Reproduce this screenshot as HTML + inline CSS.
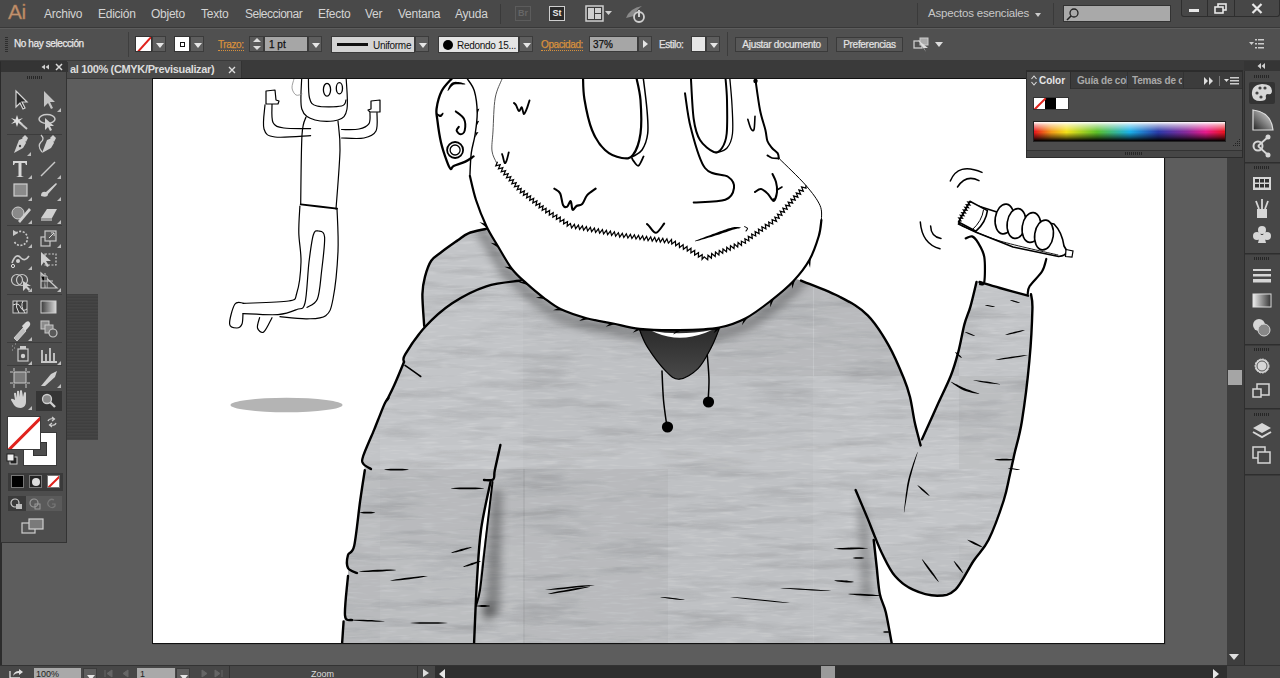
<!DOCTYPE html>
<html><head><meta charset="utf-8">
<style>
*{margin:0;padding:0;box-sizing:border-box;white-space:nowrap}
html,body{width:1280px;height:678px;overflow:hidden;background:#5d5d5d;font-family:"Liberation Sans",sans-serif}
.a{position:absolute}
#menubar{left:0;top:0;width:1280px;height:28px;background:#494949;border-bottom:1px solid #393939}
.mi{position:absolute;top:7px;font-size:12px;color:#d4d4d4;letter-spacing:-0.25px}
#ctrl{left:0;top:29px;width:1280px;height:32px;background:#505050;border-bottom:1px solid #3a3a3a}
.lbl{position:absolute;font-size:10px;color:#e0e0e0;letter-spacing:-0.4px;-webkit-text-stroke:0.25px currentColor}
.dd{position:absolute;width:14px;height:16px;background:#5e5e5e;border:1px solid #3c3c3c}
.dd:after{content:"";position:absolute;left:3px;top:6px;border-left:4px solid transparent;border-right:4px solid transparent;border-top:5px solid #e6e6e6}
.btn{position:absolute;height:15px;background:#575757;border:1px solid #3a3a3a;font-size:10px;color:#e4e4e4;text-align:center;line-height:13px;letter-spacing:-0.3px;-webkit-text-stroke:0.2px currentColor}
#tabbar{left:67px;top:61px;width:1177px;height:18px;background:#3a3a3a}
#tab{left:67px;top:61px;width:175px;height:17px;background:#4a4a4a;border-right:1px solid #333}
#artboard{left:152px;top:78px;width:1013px;height:566px;background:#fff;border:1px solid #111;box-shadow:1px 1px 0 #555}
#tools{left:0;top:61px;width:67px;height:482px;background:#4d4d4d;border:1px solid #333;border-left:1px solid #2a2a2a}
#status{left:0;top:665px;width:1280px;height:13px;background:#474747;border-top:1px solid #333}
</style></head>
<body>
<!-- menubar -->
<div id="menubar" class="a">
  <div class="a" style="left:8px;top:0px;font-size:21px;font-weight:normal;letter-spacing:-0.5px;color:#c09270;-webkit-text-stroke:0.4px #a8734c">Ai</div>
  <div class="mi" style="left:44px">Archivo</div>
  <div class="mi" style="left:98px">Edición</div>
  <div class="mi" style="left:151px">Objeto</div>
  <div class="mi" style="left:201px">Texto</div>
  <div class="mi" style="left:245px;letter-spacing:-0.5px">Seleccionar</div>
  <div class="mi" style="left:318px">Efecto</div>
  <div class="mi" style="left:365px">Ver</div>
  <div class="mi" style="left:398px">Ventana</div>
  <div class="mi" style="left:455px">Ayuda</div>
  <div class="a" style="left:500px;top:4px;width:1px;height:20px;background:#3a3a3a"></div>
  <div class="a" style="left:515px;top:6px;width:16px;height:15px;border:1px solid #5c5c5c;color:#666;font-size:9px;font-weight:bold;text-align:center;line-height:13px">Br</div>
  <div class="a" style="left:549px;top:6px;width:16px;height:15px;border:1px solid #cfcfcf;background:#2a2a2a;color:#e8e8e8;font-size:9px;font-weight:bold;text-align:center;line-height:13px">St</div>
  <svg class="a" style="left:585px;top:5px" width="28" height="18" viewBox="0 0 28 18"><rect x="1" y="1" width="17" height="15" fill="#3a3a3a" stroke="#cfcfcf" stroke-width="1.5"/><rect x="3" y="3" width="6" height="11" fill="#cfcfcf"/><rect x="10" y="3" width="6" height="5" fill="#cfcfcf"/><rect x="10" y="9" width="6" height="5" fill="#cfcfcf"/><path d="M20 6 L27 6 L23.5 10 Z" fill="#cfcfcf"/></svg>
  <svg class="a" style="left:624px;top:4px" width="24" height="20" viewBox="0 0 24 20"><path d="M2 14 Q6 4 18 2 Q12 6 10 12 Z" fill="#8a8a8a"/><circle cx="15" cy="13" r="5" fill="none" stroke="#d0d0d0" stroke-width="1.8"/><rect x="14" y="6" width="2" height="7" fill="#d0d0d0"/></svg>
  <div class="a" style="left:917px;top:3px;width:1px;height:22px;background:#3a3a3a"></div>
  <div class="mi" style="left:928px;top:7px;color:#c8c8c8;font-size:11.5px;letter-spacing:-0.2px">Aspectos esenciales</div>
  <div class="a" style="left:1035px;top:13px;border-left:3px solid transparent;border-right:3px solid transparent;border-top:4px solid #ccc"></div>
  <div class="a" style="left:1053px;top:3px;width:1px;height:22px;background:#3a3a3a"></div>
  <div class="a" style="left:1063px;top:5px;width:108px;height:17px;background:#a9a9a9;border:1px solid #333"><svg class="a" style="left:2px;top:1px" width="14" height="14" viewBox="0 0 14 14"><circle cx="8" cy="6" r="4" fill="none" stroke="#222" stroke-width="1.3"/><path d="M5 9 L1 13" stroke="#222" stroke-width="1.6"/></svg></div>
  <div class="a" style="left:1181px;top:0px;width:99px;height:17px;background:#474747;border:1px solid #2e2e2e;border-top:none;border-radius:0 0 3px 3px"></div>
  <div class="a" style="left:1207px;top:0;width:1px;height:17px;background:#2e2e2e"></div>
  <div class="a" style="left:1234px;top:0;width:1px;height:17px;background:#2e2e2e"></div>
  <div class="a" style="left:1189px;top:9px;width:10px;height:3px;background:#e8e8e8"></div>
  <svg class="a" style="left:1214px;top:3px" width="13" height="11" viewBox="0 0 13 11"><rect x="4" y="1" width="8" height="6" fill="none" stroke="#e8e8e8" stroke-width="1.6"/><rect x="1" y="4" width="8" height="6" fill="#474747" stroke="#e8e8e8" stroke-width="1.6"/></svg>
  <svg class="a" style="left:1251px;top:3px" width="12" height="11" viewBox="0 0 12 11"><path d="M1.5 1 L10.5 10 M10.5 1 L1.5 10" stroke="#e8e8e8" stroke-width="2.2"/></svg>
</div>
<!-- control bar -->
<div id="ctrl" class="a">
  <div class="a" style="left:5px;top:8px;width:3px;height:16px;background:repeating-linear-gradient(#2e2e2e 0 1px,transparent 1px 2px)"></div>
  <div class="lbl" style="left:14px;top:9px;color:#e8e8e8">No hay selección</div>
  <div class="a" style="left:128px;top:3px;width:1px;height:25px;background:#3e3e3e"></div>
  <div class="a" style="left:135px;top:7px;width:17px;height:16px;background:#fff;border:1px solid #333;overflow:hidden"><div class="a" style="left:-3px;top:7px;width:22px;height:2px;background:#e0221c;transform:rotate(-48deg)"></div></div>
  <div class="dd" style="left:152px;top:7px"></div>
  <div class="a" style="left:174px;top:7px;width:16px;height:16px;background:#fff;border:1px solid #333"><div class="a" style="left:5px;top:5px;width:5px;height:5px;border:1.5px solid #111"></div></div>
  <div class="dd" style="left:190px;top:7px"></div>
  <div class="lbl" style="left:218px;top:10px;color:#d8913d;border-bottom:1px dotted #d8913d;line-height:11px">Trazo:</div>
  <div class="a" style="left:249px;top:7px;width:15px;height:16px;background:#5a5a5a;border:1px solid #3a3a3a"></div>
  <div class="a" style="left:253px;top:9px;border-left:4px solid transparent;border-right:4px solid transparent;border-bottom:4px solid #ddd"></div>
  <div class="a" style="left:253px;top:17px;border-left:4px solid transparent;border-right:4px solid transparent;border-top:4px solid #ddd"></div>
  <div class="a" style="left:264px;top:7px;width:44px;height:16px;background:#a6a6a6;border:1px solid #3a3a3a;font-size:10px;color:#111;padding-left:4px;line-height:16px;-webkit-text-stroke:0.25px #111">1 pt</div>
  <div class="dd" style="left:308px;top:7px"></div>
  <div class="a" style="left:331px;top:7px;width:84px;height:17px;background:#d4d4d4;border:1px solid #3a3a3a;font-size:10px;color:#111;line-height:15px"><div class="a" style="left:5px;top:6px;width:31px;height:3px;background:#111"></div><span class="a" style="left:41px;top:1px;letter-spacing:-0.3px">Uniforme</span></div>
  <div class="dd" style="left:415px;top:7px"></div>
  <div class="a" style="left:438px;top:7px;width:81px;height:17px;background:#e4e4e4;border:1px solid #3a3a3a;font-size:10px;color:#111;line-height:15px"><div class="a" style="left:4px;top:3px;width:10px;height:10px;border-radius:50%;background:#000"></div><span class="a" style="left:18px;top:1px;letter-spacing:-0.3px">Redondo 15...</span></div>
  <div class="dd" style="left:519px;top:7px"></div>
  <div class="lbl" style="left:541px;top:10px;color:#d8913d;border-bottom:1px dotted #d8913d;line-height:11px">Opacidad:</div>
  <div class="a" style="left:589px;top:7px;width:49px;height:16px;background:#a6a6a6;border:1px solid #3a3a3a;font-size:10px;color:#111;padding-left:3px;line-height:16px;-webkit-text-stroke:0.25px #111">37%</div>
  <div class="a" style="left:638px;top:7px;width:14px;height:16px;background:#5e5e5e;border:1px solid #3c3c3c"><div class="a" style="left:4px;top:3px;border-top:4px solid transparent;border-bottom:4px solid transparent;border-left:5px solid #e6e6e6"></div></div>
  <div class="lbl" style="left:659px;top:10px">Estilo:</div>
  <div class="a" style="left:691px;top:7px;width:15px;height:16px;background:#e6e6e6;border:1px solid #3a3a3a"></div>
  <div class="dd" style="left:706px;top:7px"></div>
  <div class="a" style="left:727px;top:3px;width:1px;height:24px;background:#3c3c3c"></div>
  <div class="btn" style="left:735px;top:8px;width:93px">Ajustar documento</div>
  <div class="btn" style="left:836px;top:8px;width:67px">Preferencias</div>
  <svg class="a" style="left:912px;top:7px" width="34" height="18" viewBox="0 0 34 18"><rect x="2" y="5" width="8" height="7" fill="none" stroke="#ccc" stroke-width="1.3"/><rect x="8" y="2" width="8" height="7" fill="#aaa" stroke="#ccc" stroke-width="1"/><path d="M6 4 L16 12 L12 12 L14 16 Z" fill="#ddd"/><path d="M23 6 L31 6 L27 11 Z" fill="#ddd"/></svg>
  <svg class="a" style="left:1249px;top:9px" width="16" height="12" viewBox="0 0 16 12"><path d="M0 4 L5 4 L2.5 7 Z" fill="#ccc"/><rect x="6" y="1" width="2" height="1.5" fill="#ccc"/><rect x="9" y="1" width="6" height="1.5" fill="#ccc"/><rect x="6" y="5" width="2" height="1.5" fill="#ccc"/><rect x="9" y="5" width="6" height="1.5" fill="#ccc"/><rect x="6" y="9" width="2" height="1.5" fill="#ccc"/><rect x="9" y="9" width="6" height="1.5" fill="#ccc"/></svg>
</div>
<!-- pasteboard pieces -->
<div id="tabbar" class="a"></div>
<div id="tab" class="a"><span class="a" style="left:3px;top:2px;font-size:11px;font-weight:bold;color:#dcdcdc;letter-spacing:-0.35px">al 100% (CMYK/Previsualizar)</span><svg class="a" style="left:161px;top:5px" width="8" height="8" viewBox="0 0 8 8"><path d="M1 1 L7 7 M7 1 L1 7" stroke="#ddd" stroke-width="1.4"/></svg></div>
<div id="artboard" class="a"></div>
<!--ART--><svg class="a" style="left:0;top:0" width="1280" height="678" viewBox="0 0 1280 678">
<defs>
<clipPath id="abclip"><rect x="153" y="79" width="1011" height="564"/></clipPath>
<clipPath id="hoodclip"><path d="M486.0 228.8 L468.4 233.3 L457.8 240.3 L441.8 251.8 L431.2 260.7 L425.0 276.6 L422.4 294.3 L424.2 326.0 L405.2 354.3 L403.0 363.2 L394.2 385.3 L385.3 405.2 L374.2 429.6 L363.2 456.0 L364.8 470.2 L360.2 500.5 L354.2 545.8 L348.0 555.0 L348.0 576.0 L345.0 615.3 L342.0 645.0 L892.0 645.0 L885.8 612.3 L879.8 594.0 L876.7 567.0 L876.0 545.0 L874.5 536.0 L882.8 555.0 L895.0 576.0 L913.0 589.7 L937.2 595.7 L955.4 591.0 L973.5 561.0 L988.6 539.8 L1003.7 500.5 L1014.3 458.0 L1021.9 421.2 L1029.4 360.7 L1032.4 309.3 L1031.0 294.2 L1028.0 295.7 L979.5 282.0 L976.5 282.0 L970.5 306.3 L964.4 324.4 L958.4 351.6 L950.8 375.8 L937.0 406.0 L922.0 439.3 L919.0 439.3 L914.5 421.2 L910.0 397.0 L904.0 378.8 L888.8 345.6 L867.7 315.3 L840.5 297.2 L801.0 280.6 L700.0 250.0 L560.0 230.0 Z"/></clipPath>
<filter id="blur6" x="-50%" y="-50%" width="200%" height="200%"><feGaussianBlur stdDeviation="5"/></filter><filter id="blur4" x="-50%" y="-50%" width="200%" height="200%"><feGaussianBlur stdDeviation="4"/></filter>
<filter id="tex" x="0" y="0" width="100%" height="100%" filterUnits="objectBoundingBox"><feTurbulence type="fractalNoise" baseFrequency="0.012 0.1" numOctaves="4" seed="4"/><feColorMatrix type="matrix" values="0 0 0 0 0  0 0 0 0 0  0 0 0 0 0  1.6 0 0 0 -0.75"/></filter><filter id="tex2" x="0" y="0" width="100%" height="100%"><feTurbulence type="fractalNoise" baseFrequency="0.05 0.4" numOctaves="2" seed="9"/><feColorMatrix type="matrix" values="0 0 0 0 1  0 0 0 0 1  0 0 0 0 1  1.6 0 0 0 -0.8"/></filter>
<pattern id="cloth" width="1280" height="678" patternUnits="userSpaceOnUse"><rect width="1280" height="678" fill="#bcbdbe"/></pattern>
</defs>
<g clip-path="url(#abclip)">
<path d="M486.0 228.8 L468.4 233.3 L457.8 240.3 L441.8 251.8 L431.2 260.7 L425.0 276.6 L422.4 294.3 L424.2 326.0 L405.2 354.3 L403.0 363.2 L394.2 385.3 L385.3 405.2 L374.2 429.6 L363.2 456.0 L364.8 470.2 L360.2 500.5 L354.2 545.8 L348.0 555.0 L348.0 576.0 L345.0 615.3 L342.0 645.0 L892.0 645.0 L885.8 612.3 L879.8 594.0 L876.7 567.0 L876.0 545.0 L874.5 536.0 L882.8 555.0 L895.0 576.0 L913.0 589.7 L937.2 595.7 L955.4 591.0 L973.5 561.0 L988.6 539.8 L1003.7 500.5 L1014.3 458.0 L1021.9 421.2 L1029.4 360.7 L1032.4 309.3 L1031.0 294.2 L1028.0 295.7 L979.5 282.0 L976.5 282.0 L970.5 306.3 L964.4 324.4 L958.4 351.6 L950.8 375.8 L937.0 406.0 L922.0 439.3 L919.0 439.3 L914.5 421.2 L910.0 397.0 L904.0 378.8 L888.8 345.6 L867.7 315.3 L840.5 297.2 L801.0 280.6 L700.0 250.0 L560.0 230.0 Z" fill="#c3c5c8"/>
<g clip-path="url(#hoodclip)"><rect x="330" y="220" width="720" height="430" fill="#000" filter="url(#tex)" opacity="0.16"/><rect x="330" y="220" width="720" height="430" fill="#fff" filter="url(#tex2)" opacity="0.3"/></g>
<g clip-path="url(#hoodclip)"><rect x="235" y="220" width="145" height="156" fill="#000" opacity="0.02"/><rect x="235" y="376" width="145" height="93" fill="#000" opacity="0.02"/><rect x="235" y="469" width="145" height="77" fill="#000" opacity="0.035"/><rect x="235" y="546" width="145" height="104" fill="#000" opacity="0.05"/><rect x="380" y="469" width="145" height="77" fill="#000" opacity="0.05"/><rect x="380" y="546" width="145" height="104" fill="#000" opacity="0.035"/><rect x="523" y="220" width="145" height="156" fill="#000" opacity="0.02"/><rect x="523" y="376" width="145" height="93" fill="#000" opacity="0.02"/><rect x="523" y="469" width="145" height="77" fill="#000" opacity="0.05"/><rect x="523" y="546" width="145" height="104" fill="#000" opacity="0.05"/><rect x="668" y="220" width="145" height="156" fill="#000" opacity="0.05"/><rect x="668" y="376" width="145" height="93" fill="#000" opacity="0.02"/><rect x="668" y="469" width="145" height="77" fill="#000" opacity="0.02"/><rect x="668" y="546" width="145" height="104" fill="#000" opacity="0.02"/><rect x="814" y="220" width="145" height="156" fill="#000" opacity="0.05"/><rect x="814" y="546" width="145" height="104" fill="#000" opacity="0.02"/><rect x="959" y="376" width="145" height="93" fill="#000" opacity="0.035"/><rect x="959" y="546" width="145" height="104" fill="#000" opacity="0.035"/><rect x="340" y="445" width="700" height="24" fill="#fff" opacity="0.06"/></g>
<g filter="url(#blur4)" clip-path="url(#hoodclip)"><path d="M467.0 164.5 C467.5 170.6 467.8 190.6 470.1 201.3 C472.4 211.9 477.1 220.6 480.9 228.6 C484.6 236.5 488.3 241.7 492.6 249.1 C497.0 256.4 502.3 266.2 507.2 272.7 C512.2 279.1 517.0 282.9 522.5 287.8 C528.0 292.8 534.2 298.1 540.2 302.6 C546.2 307.1 551.0 311.1 558.4 314.7 C565.9 318.3 576.0 321.5 584.9 324.0 C593.8 326.4 602.8 327.6 611.8 329.4 C620.8 331.2 627.7 333.7 639.0 334.8 C650.3 335.9 666.0 336.2 679.5 336.0 C693.0 335.8 708.7 335.5 720.2 333.4 C731.8 331.3 739.3 328.4 748.6 323.5 C757.9 318.7 767.8 310.7 776.0 304.3 C784.2 297.9 791.4 292.0 797.9 285.1 C804.3 278.2 810.3 270.6 814.7 262.7 C819.2 254.8 822.4 244.7 824.5 237.7 C826.6 230.8 826.9 223.8 827.3 221.0" fill="none" stroke="#000" stroke-width="12" opacity="0.28"/><path d="M492 490 L502 490 L500 615 L484 615 Z" fill="#000" opacity="0.3"/><ellipse cx="488" cy="612" rx="6" ry="9" fill="#000" opacity="0.35"/><path d="M858 492 L868 520 L872 600 L862 600 Z" fill="#000" opacity="0.25"/></g>
<path d="M490.5 482.0 C488.9 490.0 483.2 513.7 481.0 530.0 C478.8 546.3 477.9 566.8 477.0 580.0 C476.1 593.2 475.8 604.2 475.5 609.0 L477 603 L481 567 L486 530 L492.5 482 Z" fill="#fff"/>
<path d="M486.0 228.8 C483.1 229.6 473.1 231.4 468.4 233.3 C463.7 235.2 462.2 237.2 457.8 240.3 C453.4 243.4 446.2 248.4 441.8 251.8 C437.4 255.2 434.0 256.6 431.2 260.7 C428.4 264.8 426.5 271.0 425.0 276.6 C423.5 282.2 422.5 286.1 422.4 294.3 C422.3 302.5 423.9 320.7 424.2 326.0" fill="none" stroke="#000" stroke-width="2.4" stroke-linecap="round" stroke-linejoin="round" />
<path d="M520.8 280.5 C515.0 281.5 497.8 282.5 486.3 286.3 C474.8 290.1 462.0 296.7 451.8 303.5 C441.6 310.3 432.8 318.5 425.0 327.0 C417.2 335.5 408.7 348.5 405.2 354.3 C401.7 360.1 404.2 360.7 404.0 362.0" fill="none" stroke="#000" stroke-width="2.4" stroke-linecap="round" stroke-linejoin="round" />
<path d="M404.0 362.0 C402.4 365.9 397.0 379.0 394.2 385.3 C391.4 391.6 388.2 397.6 387.0 400.0" fill="none" stroke="#000" stroke-width="2.4" stroke-linecap="round" stroke-linejoin="round" />
<path d="M388.5 398.0 C387.9 398.8 386.8 399.3 385.0 403.0 C383.2 406.7 379.8 415.6 378.0 420.0 C376.2 424.4 376.7 423.6 374.2 429.6 C371.7 435.6 365.0 450.3 363.2 456.0 C361.4 461.7 362.2 461.8 363.5 464.0 C364.8 466.2 369.8 468.2 371.0 469.0" fill="none" stroke="#000" stroke-width="2.4" stroke-linecap="round" stroke-linejoin="round" />
<path d="M364.8 470.2 C364.0 475.2 362.0 487.9 360.2 500.5 C358.4 513.1 356.2 536.7 354.2 545.8 C352.2 554.9 349.0 551.3 348.0 555.0 C347.0 558.7 346.5 565.0 348.0 568.0 C349.5 571.0 355.5 572.2 357.0 573.0" fill="none" stroke="#000" stroke-width="2.4" stroke-linecap="round" stroke-linejoin="round" />
<path d="M348.0 576.0 C347.5 582.5 344.3 608.0 345.0 615.3 C345.7 622.6 350.8 619.2 352.0 620.0" fill="none" stroke="#000" stroke-width="2.4" stroke-linecap="round" stroke-linejoin="round" />
<path d="M343.6 621.4 C343.3 625.3 342.3 641.1 342.0 645.0" fill="none" stroke="#000" stroke-width="2.4" stroke-linecap="round" stroke-linejoin="round" />
<path d="M405.0 365.4 C407.6 367.2 418.1 374.6 420.7 376.5" fill="none" stroke="#000" stroke-width="1.6" stroke-linecap="round" stroke-linejoin="round" />
<path d="M500.4 445.0 C499.5 449.2 496.0 464.5 494.8 470.2 C493.6 475.9 495.1 477.7 493.3 479.3 C491.5 480.9 485.6 479.9 484.0 480.0" fill="none" stroke="#000" stroke-width="2.4" stroke-linecap="round" stroke-linejoin="round" />
<path d="M490.5 482.0 C488.9 490.0 483.2 513.7 481.0 530.0 C478.8 546.3 478.2 560.8 477.0 580.0 C475.8 599.2 474.5 634.2 474.0 645.0" fill="none" stroke="#000" stroke-width="2.4" stroke-linecap="round" stroke-linejoin="round" />
<path d="M492.5 482.0 C491.8 488.3 489.4 507.8 488.0 520.0 C486.6 532.2 485.3 543.3 484.0 555.0 C482.7 566.7 481.3 581.5 480.0 590.0 C478.7 598.5 476.7 603.3 476.0 606.0" fill="none" stroke="#000" stroke-width="2.0" stroke-linecap="round" stroke-linejoin="round" />
<path d="M801.0 280.6 C807.6 283.4 829.4 291.4 840.5 297.2 C851.6 303.0 859.7 307.2 867.7 315.3 C875.8 323.4 882.8 335.0 888.8 345.6 C894.8 356.2 900.5 370.2 904.0 378.8 C907.5 387.4 908.2 389.9 910.0 397.0 C911.8 404.1 913.0 414.1 914.5 421.2 C916.0 428.2 918.0 435.3 919.0 439.3 C920.0 443.3 920.3 444.4 920.6 445.4" fill="none" stroke="#000" stroke-width="2.4" stroke-linecap="round" stroke-linejoin="round" />
<path d="M922.0 439.3 C924.5 433.8 932.2 416.6 937.0 406.0 C941.8 395.4 947.2 384.9 950.8 375.8 C954.4 366.7 956.1 360.2 958.4 351.6 C960.7 343.0 962.4 331.9 964.4 324.4 C966.4 316.8 968.5 313.4 970.5 306.3 C972.5 299.2 975.5 286.1 976.5 282.0" fill="none" stroke="#000" stroke-width="2.4" stroke-linecap="round" stroke-linejoin="round" />
<path d="M979.5 282.0 C982.9 283.0 991.9 285.7 1000.0 288.0 C1008.1 290.3 1023.3 294.4 1028.0 295.7" fill="none" stroke="#000" stroke-width="2.4" stroke-linecap="round" stroke-linejoin="round" />
<path d="M1031.0 294.2 C1031.2 296.7 1032.7 298.2 1032.4 309.3 C1032.1 320.4 1031.2 342.1 1029.4 360.7 C1027.7 379.3 1024.4 405.6 1021.9 421.2 C1019.4 436.8 1016.3 445.4 1014.3 454.4 C1012.3 463.4 1011.6 467.3 1009.8 475.0 C1008.0 482.7 1007.2 489.7 1003.7 500.5 C1000.2 511.3 993.6 529.7 988.6 539.8 C983.6 549.9 979.0 552.7 973.5 561.0 C968.0 569.3 961.4 583.9 955.4 589.7 C949.4 595.5 944.3 595.7 937.2 595.7 C930.1 595.7 920.0 593.0 913.0 589.7 C906.0 586.4 900.0 581.8 895.0 576.0 C890.0 570.2 886.3 562.0 882.8 555.0 C879.2 548.0 876.2 539.8 873.7 533.7 C871.2 527.6 870.7 525.9 867.7 518.6 C864.7 511.3 857.6 494.8 855.6 490.0" fill="none" stroke="#000" stroke-width="2.4" stroke-linecap="round" stroke-linejoin="round" />
<path d="M873.7 540.0 C874.2 544.5 875.7 558.0 876.7 567.0 C877.7 576.0 878.3 586.5 879.8 594.0 C881.3 601.5 883.8 603.8 885.8 612.3 C887.8 620.8 891.0 639.5 892.0 645.0" fill="none" stroke="#000" stroke-width="2.4" stroke-linecap="round" stroke-linejoin="round" />
<path d="M384.4 469.7 L385.9 470.0 L388.1 470.2 L390.6 470.4 L393.5 470.5 L396.5 470.5 L399.5 470.5 L402.4 470.4 L404.9 470.2 L407.1 470.0 L408.6 469.7 L408.6 469.5 L407.1 469.2 L404.9 469.0 L402.4 468.8 L399.5 468.7 L396.5 468.7 L393.5 468.7 L390.6 468.8 L388.1 469.0 L385.9 469.2 L384.4 469.5 Z" fill="#000"/>
<path d="M451.0 488.5 L453.1 488.8 L456.0 489.0 L459.5 489.2 L463.4 489.3 L467.5 489.3 L471.6 489.3 L475.5 489.2 L479.0 489.0 L481.9 488.8 L484.0 488.5 L484.0 488.3 L481.9 488.0 L479.0 487.8 L475.5 487.6 L471.6 487.5 L467.5 487.5 L463.4 487.5 L459.5 487.6 L456.0 487.8 L453.1 488.0 L451.0 488.3 Z" fill="#000"/>
<path d="M360.0 512.7 L361.0 513.0 L362.3 513.2 L363.9 513.4 L365.6 513.5 L367.5 513.5 L369.4 513.5 L371.1 513.4 L372.7 513.2 L374.0 513.0 L375.0 512.7 L375.0 512.5 L374.0 512.2 L372.7 512.0 L371.1 511.8 L369.4 511.7 L367.5 511.7 L365.6 511.7 L363.9 511.8 L362.3 512.0 L361.0 512.2 L360.0 512.5 Z" fill="#000"/>
<path d="M451.0 553.1 L452.4 553.0 L454.4 552.6 L456.6 552.2 L459.1 551.6 L461.8 550.9 L464.3 550.1 L466.8 549.3 L469.0 548.5 L470.8 547.7 L472.0 547.1 L472.0 546.9 L470.6 547.0 L468.6 547.4 L466.4 547.8 L463.9 548.4 L461.2 549.1 L458.7 549.9 L456.2 550.7 L454.0 551.5 L452.2 552.3 L451.0 552.9 Z" fill="#000"/>
<path d="M463.0 567.1 L464.3 567.0 L465.9 566.6 L467.9 566.2 L470.0 565.6 L472.3 564.9 L474.5 564.1 L476.6 563.3 L478.4 562.5 L480.0 561.7 L481.0 561.1 L481.0 560.9 L479.7 561.0 L478.1 561.4 L476.1 561.8 L474.0 562.4 L471.7 563.1 L469.5 563.9 L467.4 564.7 L465.6 565.5 L464.0 566.3 L463.0 566.9 Z" fill="#000"/>
<path d="M358.7 571.6 L361.1 571.8 L364.5 571.9 L368.5 571.9 L372.9 571.8 L377.6 571.7 L382.3 571.4 L386.8 571.1 L390.8 570.8 L394.1 570.4 L396.5 570.1 L396.5 569.9 L394.1 569.7 L390.7 569.6 L386.7 569.6 L382.3 569.7 L377.6 569.8 L372.9 570.1 L368.4 570.4 L364.4 570.7 L361.1 571.1 L358.7 571.4 Z" fill="#000"/>
<path d="M390.5 580.7 L392.9 580.7 L396.3 580.5 L400.3 580.2 L404.7 579.7 L409.4 579.2 L414.0 578.6 L418.4 577.9 L422.4 577.3 L425.6 576.6 L428.0 576.1 L428.0 575.9 L425.6 575.9 L422.2 576.1 L418.2 576.4 L413.8 576.9 L409.1 577.4 L404.5 578.0 L400.1 578.7 L396.1 579.3 L392.9 580.0 L390.5 580.5 Z" fill="#000"/>
<path d="M547.7 594.1 L550.5 593.9 L554.2 593.4 L558.7 592.8 L563.8 592.1 L569.0 591.2 L574.2 590.2 L579.2 589.3 L583.7 588.3 L587.4 587.4 L590.0 586.7 L590.0 586.5 L587.2 586.7 L583.5 587.2 L579.0 587.8 L573.9 588.5 L568.7 589.4 L563.5 590.4 L558.5 591.3 L554.0 592.3 L550.3 593.2 L547.7 593.9 Z" fill="#000"/>
<path d="M351.0 620.1 L353.1 620.4 L356.1 620.7 L359.6 621.0 L363.5 621.3 L367.7 621.5 L371.8 621.6 L375.8 621.7 L379.3 621.7 L382.2 621.6 L384.4 621.5 L384.4 621.3 L382.3 621.0 L379.3 620.7 L375.8 620.4 L371.9 620.1 L367.7 619.9 L363.6 619.8 L359.6 619.7 L356.1 619.7 L353.2 619.8 L351.0 619.9 Z" fill="#000"/>
<path d="M410.0 623.1 L412.4 623.3 L415.8 623.5 L419.8 623.7 L424.3 623.8 L429.0 623.8 L433.7 623.8 L438.2 623.7 L442.2 623.5 L445.6 623.3 L448.0 623.1 L448.0 622.9 L445.6 622.7 L442.2 622.5 L438.2 622.3 L433.7 622.2 L429.0 622.2 L424.3 622.2 L419.8 622.3 L415.8 622.5 L412.4 622.7 L410.0 622.9 Z" fill="#000"/>
<path d="M476.6 606.1 L477.5 606.4 L478.6 606.6 L480.1 606.8 L481.6 606.9 L483.3 606.9 L485.0 606.9 L486.5 606.8 L488.0 606.6 L489.1 606.4 L490.0 606.1 L490.0 605.9 L489.1 605.6 L488.0 605.4 L486.5 605.2 L485.0 605.1 L483.3 605.1 L481.6 605.1 L480.1 605.2 L478.6 605.4 L477.5 605.6 L476.6 605.9 Z" fill="#000"/>
<path d="M834.0 548.9 L836.2 549.1 L839.1 549.3 L842.7 549.4 L846.7 549.5 L850.9 549.4 L855.0 549.3 L859.0 549.1 L862.6 548.9 L865.5 548.6 L867.7 548.3 L867.7 548.1 L865.5 547.9 L862.6 547.7 L859.0 547.6 L855.0 547.5 L850.8 547.6 L846.7 547.7 L842.7 547.9 L839.1 548.1 L836.2 548.4 L834.0 548.7 Z" fill="#000"/>
<path d="M852.6 558.1 L853.4 558.3 L854.4 558.5 L855.7 558.7 L857.1 558.8 L858.6 558.8 L860.1 558.8 L861.5 558.7 L862.8 558.5 L863.8 558.3 L864.6 558.1 L864.6 557.9 L863.8 557.7 L862.8 557.5 L861.5 557.3 L860.1 557.2 L858.6 557.2 L857.1 557.2 L855.7 557.3 L854.4 557.5 L853.4 557.7 L852.6 557.9 Z" fill="#000"/>
<path d="M834.4 580.7 L835.6 581.0 L837.3 581.4 L839.4 581.7 L841.7 582.0 L844.1 582.2 L846.6 582.4 L848.9 582.4 L851.0 582.4 L852.7 582.3 L854.0 582.1 L854.0 581.9 L852.8 581.6 L851.1 581.2 L849.0 580.9 L846.7 580.6 L844.3 580.4 L841.8 580.2 L839.5 580.2 L837.4 580.2 L835.7 580.3 L834.4 580.5 Z" fill="#000"/>
<path d="M780.0 588.1 L783.3 588.4 L787.8 588.8 L793.2 589.3 L799.3 589.7 L805.7 590.1 L812.0 590.4 L818.1 590.7 L823.6 590.9 L828.1 591.1 L831.4 591.1 L831.4 590.9 L828.1 590.6 L823.6 590.2 L818.2 589.7 L812.1 589.3 L805.7 588.9 L799.4 588.6 L793.3 588.3 L787.8 588.1 L783.3 587.9 L780.0 587.9 Z" fill="#000"/>
<path d="M848.0 594.1 L850.1 594.5 L853.0 594.8 L856.5 595.2 L860.4 595.5 L864.5 595.8 L868.5 595.9 L872.4 596.0 L876.0 596.0 L878.9 595.9 L881.0 595.8 L881.0 595.6 L878.9 595.2 L876.0 594.9 L872.5 594.5 L868.6 594.2 L864.5 593.9 L860.5 593.8 L856.6 593.7 L853.0 593.7 L850.1 593.8 L848.0 593.9 Z" fill="#000"/>
<path d="M882.8 632.1 L883.3 632.3 L883.9 632.5 L884.7 632.7 L885.5 632.8 L886.4 632.8 L887.3 632.8 L888.1 632.7 L888.9 632.5 L889.5 632.3 L890.0 632.1 L890.0 631.9 L889.5 631.7 L888.9 631.5 L888.1 631.3 L887.3 631.2 L886.4 631.2 L885.5 631.2 L884.7 631.3 L883.9 631.5 L883.3 631.7 L882.8 631.9 Z" fill="#000"/>
<path d="M994.6 459.8 L995.9 460.1 L997.6 460.3 L999.7 460.5 L1002.0 460.6 L1004.4 460.6 L1006.9 460.6 L1009.2 460.5 L1011.3 460.3 L1013.0 460.1 L1014.3 459.8 L1014.3 459.6 L1013.0 459.3 L1011.3 459.1 L1009.2 458.9 L1006.9 458.8 L1004.4 458.8 L1002.0 458.8 L999.7 458.9 L997.6 459.1 L995.9 459.3 L994.6 459.6 Z" fill="#000"/>
<path d="M967.4 539.9 L968.2 540.6 L969.5 541.5 L971.0 542.4 L972.7 543.4 L974.6 544.4 L976.5 545.3 L978.3 546.0 L980.0 546.7 L981.5 547.1 L982.6 547.4 L982.6 547.2 L981.8 546.5 L980.5 545.6 L979.0 544.7 L977.3 543.7 L975.4 542.7 L973.5 541.8 L971.7 541.1 L970.0 540.4 L968.5 540.0 L967.4 539.7 Z" fill="#000"/>
<path d="M921.9 559.5 L922.8 561.1 L924.1 563.2 L925.7 565.7 L927.6 568.4 L929.6 571.2 L931.7 574.0 L933.8 576.6 L935.7 578.9 L937.3 580.8 L938.6 582.1 L938.8 581.9 L937.9 580.3 L936.6 578.2 L935.0 575.7 L933.1 573.0 L931.1 570.2 L929.0 567.4 L926.9 564.8 L925.0 562.5 L923.4 560.6 L922.1 559.3 Z" fill="#000"/>
<path d="M953.7 561.1 L954.1 562.0 L954.8 563.1 L955.6 564.5 L956.6 566.0 L957.8 567.5 L958.9 569.0 L960.1 570.3 L961.2 571.5 L962.2 572.4 L962.9 573.1 L963.1 572.9 L962.7 572.0 L962.0 570.9 L961.2 569.5 L960.2 568.0 L959.0 566.5 L957.9 565.0 L956.7 563.7 L955.6 562.5 L954.6 561.6 L953.9 560.9 Z" fill="#000"/>
<path d="M904.1 512.6 L904.5 510.7 L904.9 508.1 L905.4 505.1 L906.0 501.8 L906.6 498.1 L907.2 494.4 L907.8 490.6 L908.4 486.9 L909.1 483.4 L909.8 480.2 L910.5 477.1 L911.4 473.9 L912.3 470.6 L913.2 467.3 L914.2 464.1 L915.1 461.1 L915.9 458.3 L916.7 455.8 L917.3 453.7 L917.7 452.0 L917.5 452.0 L916.9 453.6 L916.1 455.6 L915.1 458.1 L914.1 460.8 L913.0 463.8 L912.0 466.9 L910.9 470.2 L909.9 473.4 L909.0 476.7 L908.2 479.8 L907.5 483.1 L906.9 486.6 L906.4 490.4 L905.8 494.2 L905.4 498.0 L905.0 501.6 L904.6 505.0 L904.3 508.1 L904.1 510.6 L903.9 512.6 Z" fill="#000"/>
<path d="M917.5 485.4 L918.2 486.2 L919.1 487.3 L920.2 488.6 L921.6 489.9 L923.1 491.3 L924.6 492.6 L926.1 493.7 L927.4 494.8 L928.6 495.6 L929.5 496.1 L929.7 495.9 L929.0 495.1 L928.1 494.0 L927.0 492.7 L925.6 491.4 L924.1 490.0 L922.6 488.7 L921.1 487.6 L919.8 486.5 L918.6 485.7 L917.7 485.2 Z" fill="#000"/>
<path d="M950.8 382.0 L951.5 382.6 L952.4 383.3 L953.5 384.2 L954.8 385.1 L956.2 386.1 L957.7 387.1 L959.3 388.0 L960.9 388.9 L962.4 389.8 L964.0 390.5 L965.5 391.1 L967.2 391.6 L969.0 392.1 L970.8 392.6 L972.6 393.0 L974.3 393.3 L975.9 393.6 L977.3 393.8 L978.5 394.0 L979.5 394.1 L979.5 393.9 L978.7 393.5 L977.5 393.0 L976.2 392.5 L974.7 391.9 L973.0 391.4 L971.3 390.8 L969.6 390.1 L967.9 389.5 L966.3 388.9 L964.8 388.3 L963.4 387.7 L961.9 387.0 L960.3 386.2 L958.7 385.4 L957.1 384.6 L955.6 383.9 L954.1 383.2 L952.8 382.6 L951.7 382.1 L950.8 381.8 Z" fill="#000"/>
<path d="M973.5 380.4 L975.2 380.8 L977.5 381.3 L980.3 381.9 L983.4 382.5 L986.6 383.0 L989.9 383.4 L993.1 383.8 L995.9 384.1 L998.3 384.3 L1000.0 384.4 L1000.0 384.2 L998.3 383.8 L996.0 383.3 L993.2 382.7 L990.1 382.1 L986.9 381.6 L983.6 381.2 L980.4 380.8 L977.6 380.5 L975.2 380.3 L973.5 380.2 Z" fill="#000"/>
<path d="M1010.0 300.1 L1010.6 300.4 L1011.4 300.8 L1012.4 301.2 L1013.6 301.7 L1014.8 302.1 L1016.1 302.4 L1017.3 302.7 L1018.4 302.9 L1019.3 303.0 L1020.0 303.1 L1020.0 302.9 L1019.4 302.6 L1018.6 302.2 L1017.6 301.8 L1016.4 301.3 L1015.2 300.9 L1013.9 300.6 L1012.7 300.3 L1011.6 300.1 L1010.7 300.0 L1010.0 299.9 Z" fill="#000"/>
<path d="M985.0 305.1 L985.6 305.4 L986.4 305.7 L987.5 306.0 L988.7 306.3 L989.9 306.6 L991.1 306.8 L992.3 307.0 L993.4 307.1 L994.3 307.1 L995.0 307.1 L995.0 306.9 L994.4 306.6 L993.6 306.3 L992.5 306.0 L991.3 305.7 L990.1 305.4 L988.9 305.2 L987.7 305.0 L986.6 304.9 L985.7 304.9 L985.0 304.9 Z" fill="#000"/>
<path d="M965.0 332.1 L965.5 332.5 L966.4 333.0 L967.4 333.6 L968.5 334.1 L969.7 334.6 L971.0 335.1 L972.2 335.5 L973.3 335.8 L974.3 336.0 L975.0 336.1 L975.0 335.9 L974.5 335.5 L973.6 335.0 L972.6 334.4 L971.5 333.9 L970.3 333.4 L969.0 332.9 L967.8 332.5 L966.7 332.2 L965.7 332.0 L965.0 331.9 Z" fill="#000"/>
<path d="M1005.0 335.1 L1006.3 335.0 L1008.1 334.7 L1010.3 334.3 L1012.7 333.8 L1015.2 333.2 L1017.6 332.5 L1020.0 331.9 L1022.1 331.2 L1023.8 330.6 L1025.0 330.1 L1025.0 329.9 L1023.7 330.0 L1021.9 330.3 L1019.7 330.7 L1017.3 331.2 L1014.8 331.8 L1012.4 332.5 L1010.0 333.1 L1007.9 333.8 L1006.2 334.4 L1005.0 334.9 Z" fill="#000"/>
<path d="M995.0 360.1 L997.2 360.0 L1000.1 359.7 L1003.6 359.3 L1007.5 358.8 L1011.6 358.2 L1015.7 357.5 L1019.6 356.9 L1023.1 356.2 L1025.9 355.6 L1028.0 355.1 L1028.0 354.9 L1025.8 355.0 L1022.9 355.3 L1019.4 355.7 L1015.5 356.2 L1011.4 356.8 L1007.3 357.5 L1003.4 358.1 L999.9 358.8 L997.1 359.4 L995.0 359.9 Z" fill="#000"/>
<path d="M954.9 352.1 L955.3 352.6 L955.8 353.3 L956.4 354.0 L957.2 354.8 L958.1 355.5 L958.9 356.2 L959.8 356.9 L960.6 357.4 L961.4 357.8 L961.9 358.1 L962.1 357.9 L961.7 357.4 L961.2 356.7 L960.6 356.0 L959.8 355.2 L958.9 354.5 L958.1 353.8 L957.2 353.1 L956.4 352.6 L955.6 352.2 L955.1 351.9 Z" fill="#000"/>
<path d="M660.0 597.1 L661.6 597.4 L663.8 597.8 L666.4 598.3 L669.3 598.7 L672.4 599.1 L675.5 599.4 L678.5 599.7 L681.2 599.9 L683.4 600.1 L685.0 600.1 L685.0 599.9 L683.4 599.6 L681.2 599.2 L678.6 598.7 L675.7 598.3 L672.6 597.9 L669.5 597.6 L666.5 597.3 L663.8 597.1 L661.6 596.9 L660.0 596.9 Z" fill="#000"/>
<path d="M730.0 597.1 L733.8 597.6 L739.1 598.3 L745.4 599.0 L752.5 599.8 L759.9 600.6 L767.4 601.3 L774.5 601.9 L780.8 602.5 L786.1 602.9 L790.0 603.1 L790.0 602.9 L786.2 602.4 L780.9 601.7 L774.6 601.0 L767.5 600.2 L760.1 599.4 L752.6 598.7 L745.5 598.1 L739.2 597.5 L733.9 597.1 L730.0 596.9 Z" fill="#000"/>
<path d="M545.0 590.1 L548.2 590.0 L552.7 589.8 L558.0 589.4 L563.9 588.9 L570.1 588.3 L576.3 587.6 L582.2 587.0 L587.5 586.3 L591.8 585.6 L595.0 585.1 L595.0 584.9 L591.8 585.0 L587.3 585.2 L582.0 585.6 L576.1 586.1 L569.9 586.7 L563.7 587.4 L557.8 588.0 L552.5 588.7 L548.2 589.4 L545.0 589.9 Z" fill="#000"/>
<path d="M1008.0 468.1 L1008.7 468.4 L1009.8 468.7 L1011.0 469.0 L1012.4 469.3 L1013.9 469.6 L1015.4 469.8 L1016.8 470.0 L1018.1 470.1 L1019.2 470.1 L1020.0 470.1 L1020.0 469.9 L1019.3 469.6 L1018.2 469.3 L1017.0 469.0 L1015.6 468.7 L1014.1 468.4 L1012.6 468.2 L1011.2 468.0 L1009.9 467.9 L1008.8 467.9 L1008.0 467.9 Z" fill="#000"/>
<defs><linearGradient id="vg" x1="0" y1="0" x2="0" y2="1"><stop offset="0" stop-color="#2a2a2a"/><stop offset="1" stop-color="#4a4a4a"/></linearGradient></defs>
<path d="M639.6 330.0 C640.9 332.9 643.2 340.5 647.6 347.4 C652.0 354.3 660.7 366.0 666.0 371.3 C671.3 376.6 674.1 379.6 679.4 379.2 C684.7 378.8 692.7 373.9 698.0 368.6 C703.3 363.3 707.8 354.0 711.3 347.4 C714.8 340.8 717.9 331.9 719.2 328.8 Z" fill="url(#vg)" stroke="#000" stroke-width="1.2"/>
<path d="M652 331 Q680 345 712 330 Q680 336 652 331 Z" fill="#fff"/>
<path d="M662.0 371.0 C662.2 375.8 662.7 390.7 663.5 400.0 C664.3 409.3 666.4 422.5 667.0 427.0" fill="none" stroke="#000" stroke-width="1.5" stroke-linecap="round" stroke-linejoin="round" />
<path d="M707.3 355.0 C707.6 359.2 708.9 372.2 709.0 380.0 C709.1 387.8 708.2 398.3 708.0 402.0" fill="none" stroke="#000" stroke-width="1.5" stroke-linecap="round" stroke-linejoin="round" />
<circle cx="667.5" cy="427" r="5.6" fill="#000"/><circle cx="708.5" cy="402" r="5.6" fill="#000"/>
<path d="M470.0 75.0 C422.7 78.8 475.0 88.7 476.0 98.0 C477.0 107.3 476.8 120.7 476.0 131.0 C475.2 141.3 471.0 148.5 471.0 160.0 C471.0 171.5 473.4 189.0 476.0 200.0 C478.6 211.0 482.7 218.3 486.3 226.0 C489.9 233.7 493.5 238.8 497.8 246.0 C502.1 253.2 507.2 262.8 512.0 269.0 C516.8 275.2 521.2 278.6 526.5 283.4 C531.8 288.2 538.0 293.5 543.8 297.8 C549.5 302.1 553.9 305.9 561.0 309.3 C568.1 312.7 577.8 315.8 586.5 318.2 C595.2 320.6 604.1 321.7 613.0 323.5 C621.9 325.3 628.5 327.7 639.6 328.8 C650.7 329.9 666.1 330.2 679.4 330.0 C692.7 329.8 708.1 329.5 719.2 327.5 C730.3 325.5 736.9 322.8 745.8 318.2 C754.6 313.6 764.3 305.8 772.3 299.6 C780.2 293.4 787.3 287.6 793.5 281.0 C799.7 274.4 805.3 267.3 809.5 259.8 C813.7 252.3 816.8 242.6 818.8 236.0 C820.8 229.4 821.2 225.1 821.4 220.0 C821.6 214.9 822.6 211.2 820.0 205.4 C817.4 199.6 812.5 193.0 805.8 185.3 C799.1 177.6 787.6 177.8 780.0 159.4 C772.4 141.0 811.7 89.1 760.0 75.0 C708.3 60.9 517.3 71.2 470.0 75.0 Z" fill="#fff"/>
<path d="M469.9 176.0 C470.9 180.0 473.3 191.7 476.0 200.0 C478.7 208.3 482.7 218.3 486.3 226.0 C489.9 233.7 493.5 238.8 497.8 246.0 C502.1 253.2 507.2 262.8 512.0 269.0 C516.8 275.2 521.2 278.6 526.5 283.4 C531.8 288.2 538.0 293.5 543.8 297.8 C549.5 302.1 553.9 305.9 561.0 309.3 C568.1 312.7 577.8 315.8 586.5 318.2 C595.2 320.6 604.1 321.7 613.0 323.5 C621.9 325.3 628.5 327.7 639.6 328.8 C650.7 329.9 666.1 330.2 679.4 330.0 C692.7 329.8 708.1 329.5 719.2 327.5 C730.3 325.5 736.9 322.8 745.8 318.2 C754.6 313.6 764.3 305.8 772.3 299.6 C780.2 293.4 787.3 287.6 793.5 281.0 C799.7 274.4 805.3 267.3 809.5 259.8 C813.7 252.3 816.8 242.6 818.8 236.0 C820.8 229.4 821.0 222.7 821.4 220.0" fill="none" stroke="#000" stroke-width="2.2" stroke-linecap="round" stroke-linejoin="round" />
<path d="M821.4 220.0 C821.2 217.6 822.6 211.2 820.0 205.4 C817.4 199.6 812.5 193.0 805.8 185.3 C799.1 177.6 784.3 163.7 780.0 159.4" fill="none" stroke="#000" stroke-width="1.0" stroke-linecap="round" stroke-linejoin="round" />
<path d="M487.4 228.3 L479.4 222.1 L485.2 223.7 Z" fill="#000"/>
<path d="M499.1 248.2 L490.6 242.7 L496.5 243.8 Z" fill="#000"/>
<path d="M513.6 271.1 L504.4 266.7 L510.4 266.9 Z" fill="#000"/>
<path d="M528.4 285.2 L518.6 282.3 L524.6 281.6 Z" fill="#000"/>
<path d="M545.9 299.3 L535.9 297.8 L541.7 296.3 Z" fill="#000"/>
<path d="M563.3 310.5 L553.1 310.3 L558.7 308.1 Z" fill="#000"/>
<path d="M589.0 318.9 L579.1 321.0 L584.0 317.5 Z" fill="#000"/>
<path d="M615.6 324.0 L605.8 326.7 L610.4 323.0 Z" fill="#000"/>
<path d="M642.2 329.1 L632.7 332.7 L637.0 328.5 Z" fill="#000"/>
<path d="M682.0 330.0 L673.0 334.6 L676.8 330.0 Z" fill="#000"/>
<path d="M721.8 327.0 L713.6 333.2 L716.6 328.0 Z" fill="#000"/>
<path d="M748.1 317.0 L742.0 325.2 L743.5 319.4 Z" fill="#000"/>
<path d="M774.3 297.9 L770.2 307.2 L770.3 301.3 Z" fill="#000"/>
<path d="M795.3 279.1 L792.3 288.8 L791.7 282.9 Z" fill="#000"/>
<path d="M810.8 257.6 L810.1 267.7 L808.2 262.0 Z" fill="#000"/>
<path d="M501.9 79.3 C500.8 82.4 496.7 89.4 495.2 98.0 C493.7 106.6 493.5 122.2 493.0 131.0 C492.5 139.8 491.4 145.8 492.0 151.0 C492.6 156.2 495.6 160.4 496.3 162.3" fill="none" stroke="#555" stroke-width="1.0" stroke-linecap="round" stroke-linejoin="round" />
<path d="M497.5 161.7 L495.8 165.8 L500.2 164.7 L498.5 168.8 L502.8 167.7 L501.2 171.8 L505.5 170.7 L503.8 174.8 L508.2 173.7 L506.5 177.8 L510.8 176.7 L509.2 180.8 L513.5 179.7 L511.8 183.8 L516.2 182.7 L514.5 186.8 L518.8 185.7 L517.2 189.8 L521.2 188.4 L520.3 192.8 L524.4 190.9 L523.4 195.3 L527.5 193.4 L526.6 197.8 L530.6 195.9 L529.7 200.3 L533.7 198.4 L532.8 202.8 L536.9 200.9 L535.9 205.3 L540.0 203.4 L539.1 207.8 L543.1 205.9 L542.2 210.3 L546.1 208.3 L545.7 212.8 L549.6 210.5 L549.3 215.0 L553.2 212.7 L552.9 217.2 L556.8 214.9 L556.4 219.4 L560.3 217.2 L560.0 221.7 L563.9 219.4 L563.6 223.9 L567.5 221.6 L567.2 226.1 L570.4 223.5 L571.6 227.8 L574.4 224.3 L575.6 228.6 L578.4 225.1 L579.6 229.4 L582.4 225.8 L583.6 230.1 L586.4 226.6 L587.6 230.9 L590.4 227.3 L591.6 231.6 L594.4 228.1 L595.6 232.4 L598.4 228.9 L599.6 233.2 L602.4 229.6 L603.6 233.9 L606.4 230.4 L607.6 234.7 L610.4 231.1 L611.6 235.4 L614.4 231.9 L615.6 236.2 L618.4 232.7 L619.7 237.0 L622.3 233.3 L623.8 237.5 L626.3 233.8 L627.9 238.0 L630.4 234.3 L631.9 238.5 L634.4 234.8 L636.0 239.0 L638.5 235.3 L640.0 239.5 L642.6 235.8 L644.1 240.1 L646.6 236.3 L648.1 240.6 L650.7 236.9 L652.2 241.1 L654.7 237.4 L656.3 241.6 L658.8 237.9 L660.3 242.1 L662.8 238.4 L664.4 242.6 L666.9 238.9 L668.4 243.1 L671.5 239.6 L671.8 244.1 L675.4 241.3 L675.7 245.8 L679.2 243.0 L679.5 247.5 L683.1 244.7 L683.4 249.2 L687.0 246.5 L687.3 251.0 L691.0 248.3 L690.9 252.8 L694.7 250.4 L694.6 255.0 L698.5 252.6 L698.4 257.1 L702.2 254.7 L702.1 259.3 L704.2 256.8 L707.7 259.7 L708.0 255.2 L711.4 258.1 L711.7 253.6 L715.2 256.5 L715.5 252.0 L718.9 254.9 L719.3 250.4 L722.7 253.3 L723.0 248.9 L726.5 251.8 L726.8 247.3 L730.2 250.2 L730.5 245.7 L734.0 248.6 L734.3 244.1 L737.7 247.0 L738.1 242.5 L741.5 245.4 L741.4 241.2 L745.5 243.2 L744.9 238.8 L748.9 240.8 L748.3 236.4 L752.3 238.4 L751.7 234.0 L755.7 236.0 L755.1 231.6 L759.1 233.6 L758.5 229.2 L762.5 231.2 L761.9 226.8 L765.9 228.8 L765.3 224.4 L769.3 226.4 L768.7 222.0 L772.7 224.0 L772.1 219.6 L776.5 221.3 L774.8 217.2 L779.2 218.3 L777.5 214.1 L781.9 215.3 L780.2 211.1 L784.5 212.3 L782.9 208.1 L787.2 209.3 L785.6 205.1 L789.9 206.2 L788.2 202.1 L792.6 203.2 L790.9 199.1 L795.2 200.2 L793.6 196.0 L797.9 197.2 L796.3 193.0 L800.6 194.2 L798.9 190.0 L803.3 191.2 L801.6 187.0 L806.0 188.1 L805.8 185.3" fill="none" stroke="#000" stroke-width="1.25"/>
<path d="M583.0 76.0 C583.2 79.8 582.9 90.0 584.4 99.0 C585.9 108.0 588.6 121.5 592.0 130.0 C595.4 138.5 600.0 145.3 605.0 150.0 C610.0 154.7 617.1 157.2 621.8 158.0 C626.5 158.8 629.9 159.1 633.0 155.0 C636.1 150.9 639.2 142.7 640.5 133.5 C641.8 124.3 641.2 109.6 640.5 100.0 C639.8 90.4 636.8 80.0 636.0 76.0" fill="none" stroke="#000" stroke-width="2.2" stroke-linecap="round" stroke-linejoin="round" />
<path d="M643.0 76.0 C643.7 81.7 646.2 100.4 647.0 110.0 C647.8 119.6 648.5 126.8 647.7 133.5 C646.9 140.2 644.5 146.2 642.0 150.0 C639.5 153.8 634.5 155.4 633.0 156.5" fill="none" stroke="#000" stroke-width="1.5" stroke-linecap="round" stroke-linejoin="round" />
<path d="M690.8 76.0 C691.3 83.2 692.2 108.3 693.7 119.0 C695.2 129.7 696.6 134.5 700.0 140.0 C703.4 145.5 710.1 150.7 713.8 152.0 C717.5 153.3 719.9 151.1 722.0 148.0 C724.1 144.9 725.9 141.5 726.7 133.5 C727.5 125.5 727.2 109.6 727.0 100.0 C726.8 90.4 725.6 80.0 725.3 76.0" fill="none" stroke="#000" stroke-width="2.0" stroke-linecap="round" stroke-linejoin="round" />
<path d="M729.6 76.0 C730.0 80.8 731.5 95.4 732.0 105.0 C732.5 114.6 733.3 126.3 732.5 133.5 C731.7 140.7 729.8 144.8 727.0 148.0 C724.2 151.2 717.8 152.2 716.0 153.0" fill="none" stroke="#000" stroke-width="1.3" stroke-linecap="round" stroke-linejoin="round" />
<path d="M685.0 93.3 C686.0 99.0 687.5 115.3 690.8 127.8 C694.1 140.2 698.8 159.8 705.0 168.0 C711.2 176.2 723.2 173.4 728.0 176.7 C732.8 180.0 734.5 184.2 734.0 188.0 C733.5 191.8 732.0 197.3 725.3 199.7 C718.6 202.1 699.0 202.0 693.7 202.5" fill="none" stroke="#000" stroke-width="2.0" stroke-linecap="round" stroke-linejoin="round" />
<path d="M755.5 80.0 C756.2 85.0 758.4 101.7 760.0 110.0 C761.6 118.3 764.2 124.8 765.4 130.0 C766.6 135.2 766.3 138.0 767.4 141.0 C768.5 144.0 770.3 145.9 772.0 148.0 C773.7 150.1 776.7 151.7 777.8 153.4 C778.9 155.2 778.6 157.7 778.8 158.5" fill="none" stroke="#000" stroke-width="2.0" stroke-linecap="round" stroke-linejoin="round" />
<path d="M778.8 158.5 C777.7 158.4 773.9 158.5 772.0 158.0 C770.1 157.5 768.2 155.8 767.4 155.4" fill="none" stroke="#000" stroke-width="1.8" stroke-linecap="round" stroke-linejoin="round" />
<circle cx="755.5" cy="81" r="2.2" fill="#000"/>
<path d="M695.3 241.4 L696.5 241.1 L698.1 240.7 L700.0 240.2 L702.0 239.6 L704.3 238.9 L706.6 238.2 L708.9 237.5 L711.2 236.9 L713.4 236.2 L715.4 235.6 L717.3 235.0 L719.2 234.4 L721.1 233.8 L723.0 233.1 L724.8 232.5 L726.6 231.9 L728.3 231.3 L729.8 230.7 L731.3 230.2 L732.6 229.8 L733.8 229.5 L734.9 229.2 L735.8 229.0 L736.8 228.8 L737.6 228.6 L738.3 228.5 L739.0 228.4 L739.6 228.3 L740.2 228.1 L740.6 228.0 L740.6 227.4 L740.1 227.3 L739.6 227.3 L739.0 227.2 L738.3 227.1 L737.5 227.0 L736.6 227.0 L735.6 227.1 L734.5 227.1 L733.3 227.3 L732.0 227.6 L730.6 227.9 L729.1 228.3 L727.4 228.8 L725.7 229.4 L723.9 230.0 L722.1 230.7 L720.2 231.3 L718.4 232.0 L716.5 232.7 L714.6 233.4 L712.7 234.1 L710.6 234.9 L708.3 235.7 L706.0 236.6 L703.8 237.4 L701.6 238.2 L699.6 239.0 L697.8 239.7 L696.3 240.3 L695.1 240.8 Z" fill="#000"/>
<path d="M744.7 226.6 C745.2 226.9 747.3 227.8 747.5 228.5 C747.7 229.2 746.2 230.6 746.0 231.0" fill="none" stroke="#000" stroke-width="1.1" stroke-linecap="round" stroke-linejoin="round" />
<path d="M514.0 103.0 C514.4 103.4 515.3 104.0 516.1 105.3 C516.9 106.6 518.0 110.8 519.0 111.1 C520.0 111.4 521.0 106.8 521.8 107.3 C522.6 107.8 523.0 113.7 523.8 114.0 C524.6 114.3 525.6 111.5 526.6 109.2 C527.6 107.0 529.0 102.0 529.5 100.5" fill="none" stroke="#000" stroke-width="1.9" stroke-linecap="round" stroke-linejoin="round" />
<path d="M502.0 154.0 C502.2 154.5 502.6 155.5 503.0 157.0 C503.4 158.5 504.0 162.2 504.6 162.8 C505.2 163.5 505.8 162.7 506.5 160.9 C507.2 159.2 508.4 153.7 508.8 152.3" fill="none" stroke="#000" stroke-width="1.8" stroke-linecap="round" stroke-linejoin="round" />
<path d="M554.4 188.7 C555.4 189.5 558.8 190.8 560.2 193.5 C561.6 196.2 561.9 202.8 563.0 205.0 C564.1 207.2 565.6 207.5 566.9 206.9 C568.2 206.3 569.8 200.7 570.7 201.2 C571.7 201.7 571.6 209.0 572.6 209.8 C573.6 210.6 574.9 207.0 576.5 206.0 C578.1 205.0 580.5 205.8 582.2 204.0 C584.0 202.2 584.8 198.0 587.0 195.4 C589.2 192.8 594.2 189.8 595.6 188.7" fill="none" stroke="#000" stroke-width="2.1" stroke-linecap="round" stroke-linejoin="round" />
<path d="M632.0 158.0 C632.2 158.4 632.2 159.3 633.3 160.6 C634.4 161.9 636.7 166.4 638.4 165.7 C640.1 165.0 642.7 157.9 643.6 156.4" fill="none" stroke="#000" stroke-width="1.8" stroke-linecap="round" stroke-linejoin="round" />
<path d="M747.8 119.3 C748.3 120.8 749.9 126.9 750.9 128.6 C751.9 130.3 753.3 131.7 754.0 129.6 C754.7 127.5 754.8 118.4 755.0 116.2" fill="none" stroke="#000" stroke-width="1.6" stroke-linecap="round" stroke-linejoin="round" />
<path d="M755.0 192.0 C756.0 191.5 758.8 188.7 761.0 189.0 C763.2 189.3 765.9 192.0 768.0 194.0 C770.1 196.0 772.1 201.1 773.6 200.8 C775.1 200.5 776.6 195.1 777.0 192.0 C777.4 188.9 776.8 185.0 776.0 182.0 C775.2 179.0 773.1 175.3 772.5 174.0" fill="none" stroke="#000" stroke-width="2.0" stroke-linecap="round" stroke-linejoin="round" />
<path d="M777.0 190.0 C777.8 189.5 781.2 187.5 782.0 187.0" fill="none" stroke="#000" stroke-width="1.6" stroke-linecap="round" stroke-linejoin="round" />
<circle cx="773.6" cy="200" r="1.8" fill="#000"/>
<path d="M647.0 224.0 C647.3 224.3 647.2 224.1 648.7 225.6 C650.2 227.1 653.4 233.2 656.0 232.8 C658.6 232.5 662.8 225.1 664.2 223.5" fill="none" stroke="#000" stroke-width="2.0" stroke-linecap="round" stroke-linejoin="round" />
<path d="M452.1 78.2 C450.4 80.3 444.4 85.8 441.8 90.8 C439.2 95.8 437.3 103.6 436.6 108.5 C435.9 113.4 436.7 114.6 437.4 120.3 C438.1 126.0 439.4 135.5 441.0 142.4 C442.6 149.3 445.4 157.2 447.0 161.6 C448.6 166.0 449.6 168.3 450.7 169.0 C451.8 169.7 451.2 167.2 453.6 166.0 C456.1 164.8 462.1 163.2 465.4 161.6 C468.7 160.0 471.7 160.0 473.5 156.4 C475.3 152.8 475.4 147.2 476.0 140.0 C476.6 132.8 477.5 121.1 477.2 112.9 C476.9 104.7 476.0 96.6 474.3 90.8 C472.6 85.0 468.1 80.3 466.9 78.2 Z" fill="#fff"/>
<path d="M452.1 78.2 C450.4 80.3 444.4 85.8 441.8 90.8 C439.2 95.8 437.3 103.6 436.6 108.5 C435.9 113.4 436.7 114.6 437.4 120.3 C438.1 126.0 439.4 135.5 441.0 142.4 C442.6 149.3 445.4 157.2 447.0 161.6 C448.6 166.0 449.6 168.3 450.7 169.0 C451.8 169.7 451.2 167.2 453.6 166.0 C456.1 164.8 462.1 163.2 465.4 161.6 C468.7 160.0 472.1 157.3 473.5 156.4" fill="none" stroke="#000" stroke-width="2.3" stroke-linecap="round" stroke-linejoin="round" />
<path d="M466.9 78.2 C468.1 80.3 472.6 85.0 474.3 90.8 C476.0 96.6 477.1 105.5 477.2 112.9 C477.3 120.3 476.0 128.3 475.0 135.0 C474.0 141.7 472.2 146.0 471.3 152.8 C470.4 159.6 470.1 172.1 469.9 176.0" fill="none" stroke="#000" stroke-width="1.4" stroke-linecap="round" stroke-linejoin="round" />
<path d="M447.9 90.9 L448.4 90.5 L448.9 89.9 L449.5 89.2 L450.1 88.4 L450.7 87.6 L451.4 86.8 L452.1 86.0 L452.8 85.4 L453.4 84.9 L454.1 84.6 L454.8 84.4 L455.8 84.3 L457.0 84.2 L458.4 84.2 L459.7 84.3 L461.1 84.3 L462.4 84.4 L463.6 84.4 L464.6 84.4 L465.4 84.3 L465.4 83.9 L464.7 83.6 L463.8 83.3 L462.7 83.0 L461.4 82.6 L460.0 82.3 L458.6 82.0 L457.1 81.9 L455.7 81.8 L454.4 81.9 L453.1 82.2 L452.0 82.8 L451.1 83.6 L450.3 84.5 L449.6 85.5 L449.1 86.5 L448.6 87.5 L448.2 88.5 L447.9 89.4 L447.7 90.1 L447.5 90.7 Z" fill="#000"/>
<path d="M436.4 113.9 L436.5 114.2 L436.7 114.5 L437.0 114.9 L437.3 115.3 L437.7 115.7 L438.1 116.1 L438.6 116.5 L439.1 116.8 L439.7 117.0 L440.4 117.1 L441.1 116.9 L441.7 116.5 L442.1 116.1 L442.5 115.6 L442.8 115.2 L443.0 114.7 L443.3 114.2 L443.4 113.8 L443.5 113.4 L443.6 113.2 L443.0 112.6 L442.7 112.8 L442.4 113.0 L442.0 113.3 L441.7 113.6 L441.3 113.9 L440.9 114.2 L440.6 114.5 L440.3 114.6 L440.2 114.7 L440.2 114.7 L440.2 114.7 L440.0 114.7 L439.7 114.6 L439.3 114.4 L438.8 114.2 L438.4 113.9 L437.9 113.7 L437.5 113.5 L437.1 113.3 L436.8 113.3 Z" fill="#000"/>
<path d="M455.8 111.4 C457.2 112.6 462.5 115.6 464.0 118.8 C465.5 122.0 465.3 128.0 464.7 130.6 C464.1 133.2 461.6 134.3 460.3 134.3 C459.0 134.3 456.9 131.8 456.6 130.6 C456.4 129.4 458.4 127.5 458.8 126.9" fill="none" stroke="#000" stroke-width="2.0" stroke-linecap="round" stroke-linejoin="round" />
<circle cx="455.1" cy="150" r="8" fill="#fff" stroke="#000" stroke-width="1.8"/><circle cx="455.1" cy="150" r="5" fill="none" stroke="#000" stroke-width="1.3"/>
<path d="M477.1 114.6 L479.4 108.4 L476.9 109.4 Z" fill="#000"/>
<path d="M476.3 126.6 L479.2 120.7 L476.7 121.4 Z" fill="#000"/>
<path d="M475.1 137.6 L478.5 131.9 L475.9 132.4 Z" fill="#000"/>
<path d="M950.3 181 Q958 162 982 172.4" fill="none" stroke="#000" stroke-width="1.5" stroke-linecap="round" stroke-linejoin="round" />
<path d="M957.5 187 Q966 174 979 180.6" fill="none" stroke="#000" stroke-width="1.5" stroke-linecap="round" stroke-linejoin="round" />
<path d="M920.3 222 Q922 244 940 248.8" fill="none" stroke="#000" stroke-width="1.5" stroke-linecap="round" stroke-linejoin="round" />
<path d="M930.6 226 Q931 237 941 238.4" fill="none" stroke="#000" stroke-width="1.5" stroke-linecap="round" stroke-linejoin="round" />
<path d="M965.7 238.4 C966.8 238.1 970.0 235.7 972.0 236.4 C974.0 237.1 976.0 239.2 978.0 242.6 C980.0 246.0 983.2 250.5 984.3 257.0 C985.3 263.5 985.0 277.3 984.3 281.8 C983.6 286.3 980.7 283.6 980.0 284.0" fill="none" stroke="#000" stroke-width="2.2" stroke-linecap="round" stroke-linejoin="round" />
<path d="M1046.3 259.0 C1045.6 261.1 1044.8 267.0 1042.0 271.5 C1039.2 276.0 1032.1 282.2 1029.7 286.0 C1027.3 289.8 1028.0 292.7 1027.7 294.0" fill="none" stroke="#000" stroke-width="2.2" stroke-linecap="round" stroke-linejoin="round" />
<path d="M975 205 L1000 213 L1054 224 Q1062 232 1064 246 L1067 251 Q1066 256 1058.6 256.5 L1013 247 L976 232.3 L958.5 224 Z" fill="#fff" stroke="#000" stroke-width="1.7" stroke-linejoin="round"/>
<path d="M1066 249.5 L1073 251 L1072 257 L1065.5 256.5 Z" fill="#fff" stroke="#000" stroke-width="1.2"/>
<path d="M962.0 226.0 C968.3 228.5 984.0 236.2 1000.0 241.0 C1016.0 245.8 1048.3 252.7 1058.0 255.0" fill="none" stroke="#000" stroke-width="0.9" stroke-linecap="round" stroke-linejoin="round" />
<path d="M969.9 201.3 L987.4 210.6 Q986 222 976 231.2 L958.5 222 Z" fill="#fff" stroke="#000" stroke-width="1.6" stroke-linejoin="round"/>
<path d="M983.5 210 Q982 221 972.5 229.5" fill="none" stroke="#000" stroke-width="1.0" stroke-linecap="round" stroke-linejoin="round" />
<path d="M971.6 202.4 L967.7 202.0 L970.1 205.0 L966.2 204.6 L968.6 207.7 L964.7 207.3 L967.1 210.4 L963.2 210.0 L965.6 213.0 L961.7 212.6 L964.1 215.7 L960.2 215.3 L962.6 218.4 L958.7 218.0 L961.1 221.0 L958.8 221.5" fill="none" stroke="#000" stroke-width="1.1"/>
<ellipse cx="1004.5" cy="219" rx="9.3" ry="15" transform="rotate(8 1004.5 219)" fill="#fff" stroke="#000" stroke-width="1.6"/>
<ellipse cx="1016.5" cy="223.5" rx="9.3" ry="15" transform="rotate(8 1016.5 223.5)" fill="#fff" stroke="#000" stroke-width="1.6"/>
<ellipse cx="1031.5" cy="227.5" rx="9.3" ry="15" transform="rotate(8 1031.5 227.5)" fill="#fff" stroke="#000" stroke-width="1.6"/>
<ellipse cx="1044" cy="235" rx="9.3" ry="15" transform="rotate(8 1044 235)" fill="#fff" stroke="#000" stroke-width="1.6"/>
<path d="M301.8 76.0 C301.8 81.5 299.6 101.7 301.8 109.0 C304.0 116.3 309.0 118.2 315.0 120.0 C321.0 121.8 332.7 121.8 338.0 120.0 C343.3 118.2 345.7 116.3 347.0 109.0 C348.3 101.7 346.2 81.5 346.0 76.0" fill="none" stroke="#000" stroke-width="1.2" stroke-linecap="round" stroke-linejoin="round" />
<path d="M308.4 76.0 C308.6 79.7 308.1 93.0 309.5 98.0 C310.9 103.0 311.6 104.7 317.0 106.0 C322.4 107.3 336.8 107.0 341.6 106.0 C346.4 105.0 345.3 101.0 346.0 100.0" fill="none" stroke="#000" stroke-width="1.2" stroke-linecap="round" stroke-linejoin="round" />
<path d="M294.0 79.0 C293.7 80.5 291.7 85.3 292.0 88.0 C292.3 90.7 294.3 94.0 296.0 95.0 C297.7 96.0 301.0 94.2 302.0 94.0" fill="none" stroke="#888" stroke-width="0.8" stroke-linecap="round" stroke-linejoin="round" />
<ellipse cx="327" cy="89.7" rx="3.6" ry="6.4" fill="none" stroke="#000" stroke-width="1.3"/><ellipse cx="339.4" cy="88.2" rx="3.1" ry="5.6" fill="none" stroke="#000" stroke-width="1.3"/>
<path d="M306.0 117.0 C305.3 120.0 302.9 120.5 302.0 135.0 C301.1 149.5 300.9 192.5 300.7 204.0" fill="none" stroke="#000" stroke-width="1.2" stroke-linecap="round" stroke-linejoin="round" />
<path d="M338.0 121.0 C338.3 125.8 340.3 135.3 340.0 150.0 C339.7 164.7 336.7 199.2 336.0 209.0" fill="none" stroke="#000" stroke-width="1.2" stroke-linecap="round" stroke-linejoin="round" />
<path d="M300.7 204.3 C306.8 205.0 330.9 208.0 337.0 208.7" fill="none" stroke="#000" stroke-width="1.8" stroke-linecap="round" stroke-linejoin="round" />
<path d="M265.0 104.8 C264.8 108.8 262.3 123.6 264.0 129.0 C265.7 134.4 267.2 135.9 275.0 137.0 C282.8 138.1 304.7 135.9 310.6 135.7" fill="none" stroke="#000" stroke-width="1.2" stroke-linecap="round" stroke-linejoin="round" />
<path d="M272.0 103.6 C272.2 106.8 271.0 118.4 273.0 122.5 C275.0 126.6 277.7 127.0 284.0 128.0 C290.3 129.0 306.2 128.5 310.6 128.6" fill="none" stroke="#000" stroke-width="1.2" stroke-linecap="round" stroke-linejoin="round" />
<path d="M377.0 112.5 C376.8 115.6 378.2 126.8 376.0 131.0 C373.8 135.2 369.7 136.8 364.0 138.0 C358.3 139.2 345.3 138.0 341.6 138.0" fill="none" stroke="#000" stroke-width="1.2" stroke-linecap="round" stroke-linejoin="round" />
<path d="M370.0 112.5 C369.8 114.3 370.8 120.8 369.0 123.6 C367.2 126.3 363.6 128.0 359.0 129.0 C354.4 130.0 344.5 129.4 341.6 129.5" fill="none" stroke="#000" stroke-width="1.2" stroke-linecap="round" stroke-linejoin="round" />
<path d="M266 91 L275 90 L276 100 L279 101 L278 104 L266 104 Z" fill="#fff" stroke="#000" stroke-width="1.2" stroke-linejoin="round"/>
<path d="M371 101 L380 100 L380 112 L370 112 L368 110 L371 109 Z" fill="#fff" stroke="#000" stroke-width="1.2" stroke-linejoin="round"/>
<path d="M299.9 206.0 C299.7 210.5 298.6 223.7 298.8 233.0 C299.0 242.3 301.3 252.0 301.0 262.0 C300.7 272.0 298.9 286.5 296.8 293.0 C294.7 299.5 297.5 299.3 288.5 301.0 C279.5 302.7 250.6 302.9 243.0 303.3" fill="none" stroke="#000" stroke-width="1.2" stroke-linecap="round" stroke-linejoin="round" />
<path d="M243.0 303.0 C241.6 303.2 237.0 300.8 234.8 304.3 C232.6 307.8 229.2 320.1 229.6 324.0 C229.9 327.9 234.8 328.0 236.9 328.0 C239.0 328.0 241.0 326.4 242.0 324.0 C243.0 321.6 242.8 315.3 243.0 313.6" fill="none" stroke="#000" stroke-width="1.2" stroke-linecap="round" stroke-linejoin="round" />
<path d="M243.0 313.6 C248.8 313.8 269.0 315.3 278.0 314.6 C287.0 313.9 292.3 311.4 296.8 309.5 C301.3 307.6 303.0 310.9 305.0 303.0 C307.0 295.1 307.6 273.3 309.0 262.0 C310.4 250.7 311.7 240.2 313.3 235.0 C314.9 229.8 316.5 230.7 318.4 231.0 C320.3 231.3 324.1 230.2 324.6 237.0 C325.1 243.8 322.7 261.7 321.5 272.0 C320.3 282.3 319.8 293.1 317.4 299.0 C315.0 304.9 308.7 306.0 307.0 307.4" fill="none" stroke="#000" stroke-width="1.2" stroke-linecap="round" stroke-linejoin="round" />
<path d="M337.0 208.3 C337.2 215.5 338.7 236.5 338.0 251.6 C337.3 266.7 335.1 288.3 333.0 299.0 C330.9 309.7 330.0 312.4 325.7 315.7 C321.4 319.0 314.6 318.6 307.0 318.8 C299.4 319.0 284.5 317.1 280.0 316.7" fill="none" stroke="#000" stroke-width="1.2" stroke-linecap="round" stroke-linejoin="round" />
<path d="M259.6 317.7 C259.2 319.4 256.8 325.6 257.5 328.0 C258.2 330.4 261.3 333.7 263.7 332.0 C266.1 330.3 270.6 320.1 272.0 317.7" fill="none" stroke="#000" stroke-width="1.2" stroke-linecap="round" stroke-linejoin="round" />
<ellipse cx="286.5" cy="405" rx="56" ry="7.2" fill="#b4b4b4"/>
</g></svg><!--/ART-->
<div class="a" style="left:0;top:61px;width:2px;height:605px;background:#2c2c2c"></div>
<div id="tools" class="a">
<svg class="a" style="left:0;top:0" width="67" height="545" viewBox="0 0 67 545">
<!-- header -->
<rect x="0" y="0" width="67" height="10" fill="#343434"/>
<path d="M44 2.5 L40.5 5 L44 7.5 Z M48 2.5 L44.5 5 L48 7.5 Z" fill="#cfcfcf"/>
<path d="M55 2 L61 8 M61 2 L55 8" stroke="#d8d8d8" stroke-width="1.5"/>
<rect x="25" y="14" width="16" height="3" fill="url(#grip)"/>
<defs><pattern id="grip" width="2" height="3" patternUnits="userSpaceOnUse"><rect width="1" height="3" fill="#262626"/></pattern></defs>
<!-- row1 selection (y~98 abs => 37 rel) -->
<path d="M15 29 L15 45 L19 41 L22 47 L24 46 L21 40 L26 40 Z" fill="#2a2a2a" stroke="#d6d6d6" stroke-width="1.2"/>
<path d="M43 29 L43 45 L47 41 L50 47 L52 46 L49 40 L54 40 Z" fill="#c4c4c4"/>
<path d="M60 50 L60 46 L56 50 Z" fill="#bdbdbd"/>
<!-- magic wand y~121 => 60 -->
<path d="M18 60 L26 67" stroke="#c9c9c9" stroke-width="2"/>
<path d="M16 53 L17.5 57.5 L22 56 L18.5 59 L22 62 L17.5 60.5 L16 65 L14.5 60.5 L10 62 L13.5 59 L10 56 L14.5 57.5 Z" fill="#e0e0e0"/>
<!-- lasso -->
<ellipse cx="46" cy="57" rx="8" ry="4.5" fill="none" stroke="#c9c9c9" stroke-width="1.5"/>
<path d="M44 56 L44 68 L47 65 L49 69 L51 68 L49 64 L53 64 Z" fill="#d0d0d0"/>
<rect x="6" y="72" width="55" height="1" fill="#3c3c3c"/>
<!-- pen y~145 => 84 -->
<path d="M13 91 L18 78 L23 76 L25 81 L22 86 Z" fill="#cfcfcf"/><path d="M21 76 L24 73 L27 76 L25 80 Z" fill="#cfcfcf"/><circle cx="19" cy="84" r="1.2" fill="#444"/>
<path d="M30 94 L30 90 L26 94 Z" fill="#bdbdbd"/>
<path d="M41 91 L46 78 L51 76 L53 81 L50 86 Z" fill="#cfcfcf"/><path d="M49 76 L52 73 L55 76 L53 80 Z" fill="#cfcfcf"/><path d="M41 90 Q36 84 40 80 Q44 77 40 73" fill="none" stroke="#c9c9c9" stroke-width="1.3"/>
<!-- type y~168 => 107 -->
<path d="M12 99 L26 99 L26 103 L25 103 L24 101 L20.5 101 L20.5 114 L23 115 L15 115 L17.5 114 L17.5 101 L14 101 L13 103 L12 103 Z" fill="#d6d6d6"/>
<path d="M31 117 L31 113 L27 117 Z" fill="#bdbdbd"/>
<path d="M40 114 L54 100" stroke="#c9c9c9" stroke-width="1.5"/>
<path d="M60 117 L60 113 L56 117 Z" fill="#bdbdbd"/>
<!-- rect y~190 => 129 -->
<rect x="13" y="122" width="13" height="12" fill="#8a8a8a" stroke="#cfcfcf" stroke-width="1.2"/>
<path d="M31 139 L31 135 L27 139 Z" fill="#bdbdbd"/>
<path d="M40 134 Q40 129 45 130 L55 121 L56 122 L47 132 Q47 136 40 134 Z" fill="#cfcfcf"/>
<path d="M60 139 L60 135 L56 139 Z" fill="#bdbdbd"/>
<!-- blob/eraser y~213 => 152 -->
<circle cx="17" cy="151" r="6" fill="#8a8a8a" stroke="#cfcfcf" stroke-width="1"/><path d="M17 159 L28 146 L30 148 L19 161 Z" fill="#cfcfcf"/>
<path d="M31 162 L31 158 L27 162 Z" fill="#bdbdbd"/>
<path d="M40 156 L46 147 L56 147 L51 156 Z" fill="#d0d0d0"/><path d="M40 156 L40 159 L51 159 L51 156 Z" fill="#9a9a9a"/>
<path d="M60 162 L60 158 L56 162 Z" fill="#bdbdbd"/>
<rect x="6" y="163" width="55" height="1" fill="#3c3c3c"/>
<!-- rotate y~237 => 176 -->
<path d="M15 171 A7 7 0 1 1 13 179" fill="none" stroke="#c9c9c9" stroke-width="1.6" stroke-dasharray="2 1.5"/><path d="M12 168 L17 171 L12 174 Z" fill="#c9c9c9"/>
<path d="M31 186 L31 182 L27 186 Z" fill="#bdbdbd"/>
<rect x="40" y="175" width="9" height="9" fill="none" stroke="#c9c9c9" stroke-width="1.2"/><rect x="44" y="169" width="11" height="10" fill="#5a5a5a" stroke="#c9c9c9" stroke-width="1.2"/><path d="M48 176 L53 171 M50 171 L53 171 L53 174" stroke="#e0e0e0" stroke-width="1"/>
<path d="M60 186 L60 182 L56 186 Z" fill="#bdbdbd"/>
<!-- warp y~259 => 198 -->
<path d="M11 201 Q15 190 20 196 Q24 200 28 194" fill="none" stroke="#c9c9c9" stroke-width="1.6"/><circle cx="12" cy="204" r="1.6" fill="none" stroke="#e0e0e0"/><circle cx="17" cy="199" r="2" fill="#cfcfcf"/>
<path d="M31 208 L31 204 L27 208 Z" fill="#bdbdbd"/>
<rect x="44" y="192" width="11" height="11" fill="none" stroke="#c9c9c9" stroke-width="1.2" stroke-dasharray="2 1.5"/><path d="M40 190 L40 204 L43 200 L46 205 L48 204 L45 199 L50 199 Z" fill="#cfcfcf"/>
<!-- shape builder y~281 => 220 -->
<circle cx="16" cy="218" r="5.5" fill="none" stroke="#c9c9c9" stroke-width="1.2"/><circle cx="21" cy="218" r="5.5" fill="none" stroke="#c9c9c9" stroke-width="1.2"/><path d="M22 219 L22 229 L25 226 L28 229 L29 227 L26 224 L30 224 Z" fill="#cfcfcf"/>
<path d="M31 230 L31 226 L27 230 Z" fill="#bdbdbd"/>
<path d="M40 211 L40 226 L56 226 L40 211 Z" fill="none" stroke="#c9c9c9" stroke-width="1.2"/><path d="M40 214 L46 214 L46 226 M40 219 L52 219 M44 211 L44 226" stroke="#c9c9c9" stroke-width="1"/>
<path d="M60 230 L60 226 L56 230 Z" fill="#bdbdbd"/>
<rect x="6" y="232" width="55" height="1" fill="#3c3c3c"/>
<!-- mesh y~306 => 245 -->
<rect x="12" y="239" width="14" height="12" fill="#3a3a3a" stroke="#c9c9c9" stroke-width="1"/><path d="M12 243 Q18 240 20 246 Q22 250 26 247 M16 239 Q14 245 18 251 M22 239 Q19 244 24 251" fill="none" stroke="#e0e0e0" stroke-width="1"/>
<defs><linearGradient id="gr1"><stop offset="0" stop-color="#3a3a3a"/><stop offset="1" stop-color="#d8d8d8"/></linearGradient></defs>
<rect x="40" y="239" width="15" height="12" fill="url(#gr1)" stroke="#cfcfcf" stroke-width="1"/>
<!-- eyedropper y~329 => 268 -->
<path d="M13 276 L22 266 L25 269 L16 279 Z" fill="#bdbdbd" stroke="#dcdcdc" stroke-width="0.8"/><path d="M21 264 L25 260 Q28 258 29 261 Q30 263 27 266 L24 269 Z" fill="#d8d8d8"/>
<path d="M31 279 L31 275 L27 279 Z" fill="#bdbdbd"/>
<rect x="40" y="259" width="8" height="8" fill="#8a8a8a" stroke="#c9c9c9" stroke-width="1"/><rect x="44" y="263" width="8" height="8" fill="#8a8a8a" stroke="#c9c9c9" stroke-width="1"/><circle cx="52" cy="271" r="4" fill="#5a5a5a" stroke="#c9c9c9" stroke-width="1.2"/>
<rect x="6" y="280" width="55" height="1" fill="#3c3c3c"/>
<!-- spray y~353 => 292 -->
<rect x="17" y="287" width="10" height="12" fill="#4a4a4a" stroke="#c9c9c9" stroke-width="1.2"/><circle cx="22" cy="294" r="2.2" fill="#cfcfcf"/><rect x="19" y="284" width="6" height="3" fill="#c9c9c9"/><path d="M11 284 L12 284 M13 286 L14 286 M11 288 L12 288 M14 282 L15 282" stroke="#aaa"/>
<path d="M31 303 L31 299 L27 303 Z" fill="#bdbdbd"/>
<path d="M40 300 L56 300 M41 300 L41 288 M45 300 L45 292 M49 300 L49 286 M53 300 L53 291" stroke="#c9c9c9" stroke-width="1.8"/>
<path d="M60 303 L60 299 L56 303 Z" fill="#bdbdbd"/>
<rect x="6" y="303" width="55" height="1" fill="#3c3c3c"/>
<!-- artboard y~377 => 316 -->
<rect x="13" y="310" width="12" height="11" fill="#7a7a7a" stroke="#c9c9c9" stroke-width="1"/><path d="M13 306 L13 309 M25 306 L25 309 M13 322 L13 326 M25 322 L25 326 M9 310 L12 310 M9 321 L12 321 M26 310 L29 310 M26 321 L29 321" stroke="#c9c9c9" stroke-width="1"/>
<path d="M40 324 L50 312 L56 309 L54 315 L44 324 Z" fill="#cfcfcf"/>
<path d="M60 326 L60 322 L56 326 Z" fill="#bdbdbd"/>
<!-- hand y~400 => 339 -->
<path d="M14 338 L13 332 Q13 330 15 331 L16 336 L16 330 Q16 328 18 329 L19 335 L19 329 Q20 327 21 329 L22 335 L23 331 Q24 329 25 331 L25 340 Q25 345 20 346 Q15 346 13 343 L10 338 Q10 336 12 337 Z" fill="#d0d0d0"/>
<path d="M31 348 L31 344 L27 348 Z" fill="#bdbdbd"/>
<rect x="35" y="329" width="26" height="20" fill="#353535"/>
<circle cx="46" cy="337" r="4.5" fill="#8a8a8a" stroke="#cfcfcf" stroke-width="1.3"/><path d="M49 340 L54 345" stroke="#cfcfcf" stroke-width="2.4"/>
</svg>
 <div class="a" style="left:22px;top:370px;width:34px;height:34px;background:#fff;border:1px solid #3a3a3a"><div class="a" style="left:9px;top:9px;width:14px;height:14px;background:#4d4d4d;border:1px solid #333"></div></div>
 <div class="a" style="left:6px;top:354px;width:34px;height:34px;background:#fff;border:1px solid #3a3a3a;overflow:hidden"><div class="a" style="left:-6px;top:15px;width:46px;height:2.5px;background:#e0221c;transform:rotate(-45deg)"></div></div>
 <svg class="a" style="left:45px;top:354px" width="12" height="12" viewBox="0 0 12 12"><path d="M2 5 Q3 2 8 3 M6 1 L8.5 3 L6 5 M10 7 Q9 10 4 9 M6 7 L3.5 9 L6 11" fill="none" stroke="#cfcfcf" stroke-width="1.2"/></svg>
 <svg class="a" style="left:5px;top:391px" width="12" height="12" viewBox="0 0 12 12"><rect x="4" y="4" width="7" height="7" fill="#222" stroke="#cfcfcf"/><rect x="1" y="1" width="7" height="7" fill="#eee" stroke="#222"/></svg>
 <div class="a" style="left:7px;top:411px;width:55px;height:18px;background:#3a3a3a"></div>
 <div class="a" style="left:10px;top:413px;width:13px;height:13px;background:#000;border:1px solid #777"></div>
 <div class="a" style="left:28px;top:413px;width:13px;height:13px;background:#222;border:1px solid #777"><div class="a" style="left:2px;top:2px;width:8px;height:8px;border-radius:50%;background:#ddd"></div></div>
 <div class="a" style="left:46px;top:413px;width:13px;height:13px;background:#fff;border:1px solid #777;overflow:hidden"><div class="a" style="left:-3px;top:5px;width:18px;height:2px;background:#e0221c;transform:rotate(-45deg)"></div></div>
 <div class="a" style="left:7px;top:434px;width:54px;height:15px;background:#5a5a5a"></div>
 <div class="a" style="left:7px;top:434px;width:18px;height:15px;background:#3a3a3a"></div>
 <svg class="a" style="left:9px;top:436px" width="50" height="12" viewBox="0 0 50 12"><circle cx="5" cy="5" r="4" fill="none" stroke="#ccc" stroke-width="1.2"/><rect x="6" y="6" width="6" height="5" fill="#bbb"/><circle cx="24" cy="5" r="4" fill="none" stroke="#999" stroke-width="1.2"/><rect x="25" y="6" width="5" height="5" fill="none" stroke="#999"/><path d="M44 2 A4 4 0 1 0 45 8 L45 6 L42 6" fill="none" stroke="#777" stroke-width="1.2"/></svg>
 <svg class="a" style="left:20px;top:456px" width="24" height="18" viewBox="0 0 24 18"><rect x="1" y="5" width="13" height="10" fill="#555" stroke="#cfcfcf" stroke-width="1.2"/><rect x="8" y="1" width="14" height="10" fill="#7a7a7a" stroke="#cfcfcf" stroke-width="1.2"/></svg>
</div>
<div class="a" style="left:67px;top:294px;width:31px;height:146px;background:repeating-linear-gradient(#3f3f3f 0 1px,#454545 1px 2px,#424242 2px 3px)"></div>

<!-- vertical scrollbar -->
<div class="a" style="left:1227px;top:71px;width:17px;height:595px;background:#3e3e3e"></div>
<div class="a" style="left:1228px;top:370px;width:14px;height:15px;background:#a5a5a5"></div>
<div class="a" style="left:1229px;top:654px;border-left:5px solid transparent;border-right:5px solid transparent;border-top:6px solid #e0e0e0"></div>
<!-- right dock -->
<div class="a" style="left:1244px;top:61px;width:36px;height:617px;background:#474747;border-left:1px solid #2e2e2e"></div>
<div class="a" style="left:1244px;top:61px;width:36px;height:10px;background:#353535"></div>
<svg class="a" style="left:1256px;top:62px" width="12" height="8" viewBox="0 0 12 8"><path d="M5 1 L1.5 4 L5 7 Z M9 1 L5.5 4 L9 7 Z" fill="#d0d0d0"/></svg>
<svg class="a" style="left:1244px;top:71px" width="36" height="420" viewBox="0 0 36 420">
<defs><pattern id="grip2" width="2" height="3" patternUnits="userSpaceOnUse"><rect width="1" height="3" fill="#262626"/></pattern></defs>
<g fill="#2e2e2e"><rect x="0" y="91" width="36" height="1.5"/><rect x="0" y="182" width="36" height="1.5"/><rect x="0" y="273" width="36" height="1.5"/><rect x="0" y="337" width="36" height="1.5"/><rect x="0" y="403" width="36" height="1.5"/></g>
<rect x="10" y="4" width="16" height="3" fill="url(#grip2)"/>
<rect x="10" y="95" width="16" height="3" fill="url(#grip2)"/>
<rect x="10" y="186" width="16" height="3" fill="url(#grip2)"/>
<rect x="10" y="277" width="16" height="3" fill="url(#grip2)"/>
<rect x="10" y="342" width="16" height="3" fill="url(#grip2)"/>
<rect x="5" y="11" width="26" height="22" rx="2" fill="#333"/>
<!-- palette -->
<path d="M8 24 Q7 14 18 13 Q28 13 28 20 Q28 24 24 23 Q21 23 22 27 Q22 30 16 30 Q9 30 8 24 Z" fill="#d6d6d6"/>
<g fill="#444"><circle cx="13" cy="22" r="1.6"/><circle cx="16" cy="17" r="1.6"/><circle cx="21" cy="17" r="1.6"/><circle cx="17" cy="26" r="1.6"/></g>
<!-- gradient quarter -->
<defs><linearGradient id="gq" x1="0" y1="1" x2="1" y2="0"><stop offset="0" stop-color="#222"/><stop offset="1" stop-color="#eee"/></linearGradient></defs>
<path d="M9 59 L9 39 Q27 41 29 59 Z" fill="url(#gq)" stroke="#ddd" stroke-width="1.2"/>
<!-- symbols -->
<circle cx="14" cy="75" r="4.5" fill="none" stroke="#d6d6d6" stroke-width="2"/><path d="M14 75 L24 66 M14 75 L24 84" stroke="#d6d6d6" stroke-width="1.8"/><circle cx="24" cy="66" r="2.5" fill="#d6d6d6"/><circle cx="24" cy="84" r="2.5" fill="#d6d6d6"/>
<!-- swatches -->
<rect x="9" y="106" width="18" height="13" fill="#d6d6d6"/><g fill="#333"><rect x="11" y="108" width="4" height="3.5"/><rect x="16" y="108" width="4" height="3.5"/><rect x="21" y="108" width="4" height="3.5"/><rect x="11" y="113" width="4" height="3.5"/><rect x="16" y="113" width="4" height="3.5"/><rect x="21" y="113" width="4" height="3.5"/></g>
<!-- brushes -->
<rect x="13" y="138" width="10" height="9" fill="#d6d6d6"/><path d="M15 138 L12 130 M18 138 L18 128 M21 138 L24 130" stroke="#d6d6d6" stroke-width="1.8"/>
<!-- clubs -->
<g fill="#d6d6d6"><circle cx="18" cy="159" r="4"/><circle cx="13" cy="165" r="4"/><circle cx="23" cy="165" r="4"/><path d="M16 164 L20 164 L22 172 L14 172 Z"/></g>
<!-- stroke -->
<g fill="#d6d6d6"><rect x="9" y="198" width="18" height="2"/><rect x="9" y="203" width="18" height="2.5"/><rect x="9" y="208" width="18" height="3.5"/></g>
<!-- gradient -->
<defs><linearGradient id="gr2"><stop offset="0" stop-color="#eee"/><stop offset="1" stop-color="#333"/></linearGradient></defs>
<rect x="9" y="223" width="18" height="13" fill="url(#gr2)" stroke="#ddd" stroke-width="1"/>
<!-- transparency -->
<circle cx="15" cy="254" r="6" fill="#d6d6d6"/><circle cx="20" cy="259" r="6" fill="#888" stroke="#d6d6d6" stroke-width="1"/>
<!-- appearance -->
<circle cx="18" cy="295" r="7" fill="#d6d6d6" stroke="#d6d6d6" stroke-width="1" stroke-dasharray="2 1"/><circle cx="18" cy="295" r="5" fill="#d6d6d6" stroke="#555" stroke-width="1"/>
<!-- graphic styles -->
<rect x="13" y="313" width="12" height="11" fill="none" stroke="#d6d6d6" stroke-width="1.5"/><rect x="9" y="318" width="8" height="8" fill="#474747" stroke="#d6d6d6" stroke-width="1.5"/>
<!-- layers -->
<path d="M18 352 L27 357 L18 362 L9 357 Z" fill="#d6d6d6"/><path d="M9 361 L18 366 L27 361" fill="none" stroke="#d6d6d6" stroke-width="2"/>
<!-- artboards -->
<rect x="9" y="376" width="12" height="11" fill="none" stroke="#d6d6d6" stroke-width="1.5"/><rect x="14" y="381" width="12" height="11" fill="#474747" stroke="#d6d6d6" stroke-width="1.5"/>
</svg>
<!-- color panel -->
<div class="a" style="left:1026px;top:70px;width:217px;height:88px;background:#4c4c4c;border:1px solid #2c2c2c;border-top:2px solid #2c2c2c"></div>
<div class="a" style="left:1027px;top:72px;width:215px;height:17px;background:#3c3c3c;border-bottom:1px solid #333"></div>
<div class="a" style="left:1027px;top:72px;width:43px;height:18px;background:#4c4c4c"></div>
<svg class="a" style="left:1031px;top:75px" width="6" height="11" viewBox="0 0 6 11"><path d="M0.5 4 L3 1 L5.5 4 M0.5 7 L3 10 L5.5 7" fill="none" stroke="#ddd" stroke-width="1.1"/></svg>
<span class="a" style="left:1039px;top:75px;font-size:10px;font-weight:bold;color:#e6e6e6">Color</span>
<div class="a" style="left:1070px;top:72px;width:1px;height:17px;background:#2e2e2e"></div>
<div class="a" style="left:1076px;top:72px;width:51px;height:17px;overflow:hidden"><span class="a" style="left:1px;top:3px;font-size:10px;font-weight:bold;color:#a9a9a9;letter-spacing:-0.2px">Guía de color</span></div>
<div class="a" style="left:1127px;top:72px;width:1px;height:17px;background:#333"></div>
<div class="a" style="left:1132px;top:72px;width:50px;height:17px;overflow:hidden"><span class="a" style="left:0px;top:3px;font-size:10px;font-weight:bold;color:#a9a9a9;letter-spacing:-0.2px">Temas de color</span></div>
<div class="a" style="left:1183px;top:72px;width:1px;height:17px;background:#333"></div>
<svg class="a" style="left:1204px;top:76px" width="38" height="10" viewBox="0 0 38 10"><path d="M0 1 L4 5 L0 9 Z M5 1 L9 5 L5 9 Z" fill="#ddd"/><rect x="15" y="0" width="1" height="10" fill="#777"/><path d="M20 3 L25 3 L22.5 6 Z" fill="#ddd"/><g fill="#ccc"><rect x="26" y="1" width="9" height="1.5"/><rect x="26" y="4" width="9" height="1.5"/><rect x="26" y="7" width="9" height="1.5"/></g></svg>
<div class="a" style="left:1033px;top:97px;width:36px;height:13px;border:1px solid #333;background:linear-gradient(90deg,#fff 0 33%,#000 33% 66%,#fff 66%);overflow:hidden"><div class="a" style="left:-2px;top:5px;width:16px;height:2px;background:#e0221c;transform:rotate(-45deg)"></div></div>
<div class="a" style="left:1033px;top:121px;width:193px;height:21px;border:1px solid #222;background:linear-gradient(180deg,#fff 0%,rgba(255,255,255,0.6) 15%,rgba(255,255,255,0) 50%,rgba(0,0,0,0) 55%,rgba(0,0,0,0.5) 80%,#000 100%),linear-gradient(90deg,#e8141c 0%,#f29a1a 9%,#f2e01a 17%,#5cc02a 33%,#1ab0e8 50%,#2a3aa8 65%,#8a2a9a 80%,#e81a8a 90%,#e8141c 100%)"></div>
<svg class="a" style="left:1232px;top:138px" width="9" height="9" viewBox="0 0 9 9"><g fill="#222"><rect x="7" y="1" width="1" height="1"/><rect x="5" y="3" width="1" height="1"/><rect x="7" y="3" width="1" height="1"/><rect x="3" y="5" width="1" height="1"/><rect x="5" y="5" width="1" height="1"/><rect x="7" y="5" width="1" height="1"/><rect x="1" y="7" width="1" height="1"/><rect x="3" y="7" width="1" height="1"/><rect x="5" y="7" width="1" height="1"/><rect x="7" y="7" width="1" height="1"/></g></svg>
<div class="a" style="left:1027px;top:150px;width:215px;height:7px;background:#464646;border-top:1px solid #333"></div>
<div class="a" style="left:1125px;top:152px;width:18px;height:3px;background:repeating-linear-gradient(90deg,#262626 0 1px,transparent 1px 2px)"></div>
<!-- status bar -->
<div id="status" class="a">
 <svg class="a" style="left:8px;top:1px" width="16" height="12" viewBox="0 0 16 12"><path d="M2 4 L2 11 L12 11" fill="none" stroke="#ddd" stroke-width="1.3"/><path d="M5 9 Q6 4 11 4 L11 2 L15 5 L11 8 L11 6 Q7 6 5 9 Z" fill="#ddd"/></svg>
 <div class="a" style="left:34px;top:2px;width:47px;height:12px;background:#a9a9a9;font-size:9px;color:#222;padding-left:2px;line-height:12px">100%</div>
 <div class="dd" style="left:83px;top:2px;height:12px"></div>
 <svg class="a" style="left:104px;top:3px" width="30" height="9" viewBox="0 0 30 9"><path d="M1 1 L1 8 M8 1 L3 4.5 L8 8 Z M24 1 L19 4.5 L24 8 Z" stroke="#666" fill="#666"/></svg>
 <div class="a" style="left:137px;top:2px;width:38px;height:12px;background:#a9a9a9;font-size:9px;color:#222;padding-left:3px;line-height:12px">1</div>
 <div class="dd" style="left:176px;top:2px;height:12px"></div>
 <svg class="a" style="left:198px;top:3px" width="30" height="9" viewBox="0 0 30 9"><path d="M4 1 L9 4.5 L4 8 Z M17 1 L22 4.5 L17 8 Z M24 1 L24 8" stroke="#666" fill="#666"/></svg>
 <div class="a" style="left:229px;top:0;width:1px;height:12px;background:#333"></div>
 <span class="a" style="left:311px;top:3px;font-size:9px;color:#ddd">Zoom</span>
 <div class="a" style="left:417px;top:0;width:1px;height:12px;background:#333"></div>
 <div class="a" style="left:423px;top:3px;border-top:4px solid transparent;border-bottom:4px solid transparent;border-left:6px solid #ddd"></div>
 <div class="a" style="left:435px;top:0;width:792px;height:12px;background:#2f2f2f"></div>
 <div class="a" style="left:439px;top:3px;border-top:5px solid transparent;border-bottom:5px solid transparent;border-right:6px solid #e6e6e6"></div>
 <div class="a" style="left:821px;top:0px;width:14px;height:12px;background:#9a9a9a"></div>
 <div class="a" style="left:1213px;top:3px;border-top:5px solid transparent;border-bottom:5px solid transparent;border-left:6px solid #e6e6e6"></div>
</div>
</body></html>
